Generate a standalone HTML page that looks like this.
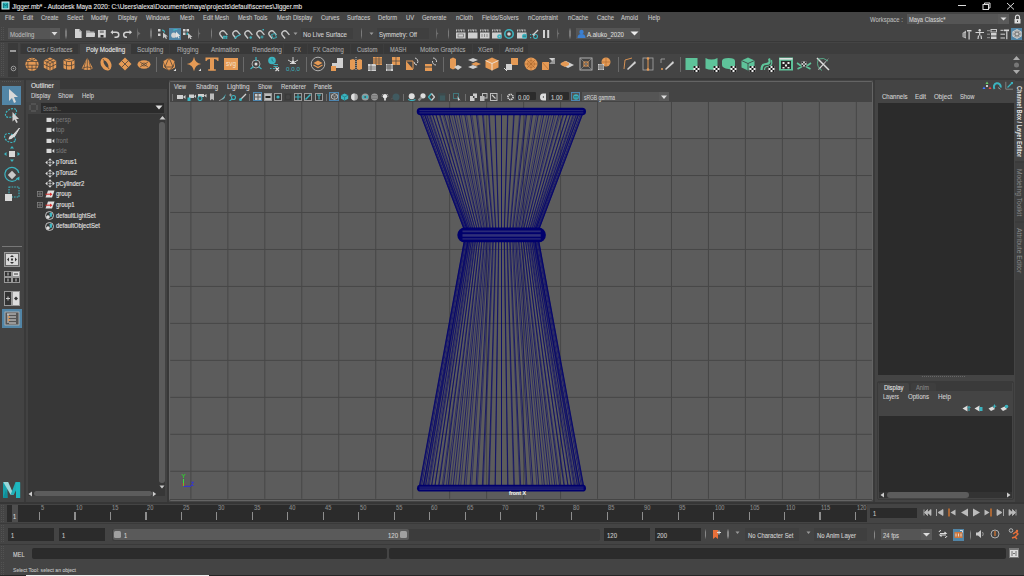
<!DOCTYPE html><html><head><meta charset="utf-8"><title>Maya</title><style>
*{margin:0;padding:0;box-sizing:border-box}
html,body{width:1024px;height:576px;overflow:hidden;background:#444}
body{position:relative;font-family:"Liberation Sans",sans-serif}
div,span,svg{position:absolute;display:block}
span{white-space:nowrap;transform-origin:0 0}
</style></head><body><div style="left:0px;top:0px;width:1024px;height:12px;background:#000;"></div>
<svg style="left:1px;top:1px;" width="9" height="9" viewBox="0 0 9 9"><rect x="0.5" y="0.5" width="8" height="8" fill="#d8f0f0"/><rect x="1.5" y="1.5" width="6" height="6" fill="#2ab2b8"/><path d="M2.6 7V2.6L4.5 5L6.4 2.6V7" stroke="#127880" stroke-width="1" fill="none"/></svg>
<span style="left:12.3px;top:2.97px;font-size:7px;line-height:7px;color:#e8e8e8;transform:scaleX(0.916);-webkit-text-stroke:0.1px #e8e8e8;">Jigger.mb* - Autodesk Maya 2020: C:\Users\alexa\Documents\maya\projects\default\scenes\Jigger.mb</span>
<div style="left:958px;top:5px;width:8px;height:1px;background:#ddd;"></div>
<svg style="left:982px;top:2px;" width="9" height="8" viewBox="0 0 9 8"><rect x="1" y="2.5" width="5.5" height="5" fill="none" stroke="#ddd" stroke-width="1"/><path d="M2.5 2.5V1H8V6H6.5" fill="none" stroke="#ddd" stroke-width="1"/></svg>
<svg style="left:1006px;top:2px;" width="9" height="8" viewBox="0 0 9 8"><path d="M1 1L8 7.5M8 1L1 7.5" stroke="#ddd" stroke-width="1"/></svg>
<div style="left:0px;top:12px;width:1024px;height:14px;background:#444444;"></div>
<span style="left:4.7px;top:15.30px;font-size:6.5px;line-height:6.5px;color:#c8c8c8;transform:scaleX(0.900);-webkit-text-stroke:0.1px #c8c8c8;">File</span>
<span style="left:22.5px;top:15.30px;font-size:6.5px;line-height:6.5px;color:#c8c8c8;transform:scaleX(0.900);-webkit-text-stroke:0.1px #c8c8c8;">Edit</span>
<span style="left:41.2px;top:15.30px;font-size:6.5px;line-height:6.5px;color:#c8c8c8;transform:scaleX(0.900);-webkit-text-stroke:0.1px #c8c8c8;">Create</span>
<span style="left:66.8px;top:15.30px;font-size:6.5px;line-height:6.5px;color:#c8c8c8;transform:scaleX(0.900);-webkit-text-stroke:0.1px #c8c8c8;">Select</span>
<span style="left:90.9px;top:15.30px;font-size:6.5px;line-height:6.5px;color:#c8c8c8;transform:scaleX(0.900);-webkit-text-stroke:0.1px #c8c8c8;">Modify</span>
<span style="left:117.6px;top:15.30px;font-size:6.5px;line-height:6.5px;color:#c8c8c8;transform:scaleX(0.900);-webkit-text-stroke:0.1px #c8c8c8;">Display</span>
<span style="left:145.8px;top:15.30px;font-size:6.5px;line-height:6.5px;color:#c8c8c8;transform:scaleX(0.900);-webkit-text-stroke:0.1px #c8c8c8;">Windows</span>
<span style="left:179.7px;top:15.30px;font-size:6.5px;line-height:6.5px;color:#c8c8c8;transform:scaleX(0.900);-webkit-text-stroke:0.1px #c8c8c8;">Mesh</span>
<span style="left:202.7px;top:15.30px;font-size:6.5px;line-height:6.5px;color:#c8c8c8;transform:scaleX(0.900);-webkit-text-stroke:0.1px #c8c8c8;">Edit Mesh</span>
<span style="left:237.9px;top:15.30px;font-size:6.5px;line-height:6.5px;color:#c8c8c8;transform:scaleX(0.900);-webkit-text-stroke:0.1px #c8c8c8;">Mesh Tools</span>
<span style="left:276.8px;top:15.30px;font-size:6.5px;line-height:6.5px;color:#c8c8c8;transform:scaleX(0.900);-webkit-text-stroke:0.1px #c8c8c8;">Mesh Display</span>
<span style="left:320.8px;top:15.30px;font-size:6.5px;line-height:6.5px;color:#c8c8c8;transform:scaleX(0.900);-webkit-text-stroke:0.1px #c8c8c8;">Curves</span>
<span style="left:347px;top:15.30px;font-size:6.5px;line-height:6.5px;color:#c8c8c8;transform:scaleX(0.900);-webkit-text-stroke:0.1px #c8c8c8;">Surfaces</span>
<span style="left:378px;top:15.30px;font-size:6.5px;line-height:6.5px;color:#c8c8c8;transform:scaleX(0.900);-webkit-text-stroke:0.1px #c8c8c8;">Deform</span>
<span style="left:406px;top:15.30px;font-size:6.5px;line-height:6.5px;color:#c8c8c8;transform:scaleX(0.900);-webkit-text-stroke:0.1px #c8c8c8;">UV</span>
<span style="left:422px;top:15.30px;font-size:6.5px;line-height:6.5px;color:#c8c8c8;transform:scaleX(0.900);-webkit-text-stroke:0.1px #c8c8c8;">Generate</span>
<span style="left:455.7px;top:15.30px;font-size:6.5px;line-height:6.5px;color:#c8c8c8;transform:scaleX(0.900);-webkit-text-stroke:0.1px #c8c8c8;">nCloth</span>
<span style="left:481.6px;top:15.30px;font-size:6.5px;line-height:6.5px;color:#c8c8c8;transform:scaleX(0.900);-webkit-text-stroke:0.1px #c8c8c8;">Fields/Solvers</span>
<span style="left:527.6px;top:15.30px;font-size:6.5px;line-height:6.5px;color:#c8c8c8;transform:scaleX(0.900);-webkit-text-stroke:0.1px #c8c8c8;">nConstraint</span>
<span style="left:567.7px;top:15.30px;font-size:6.5px;line-height:6.5px;color:#c8c8c8;transform:scaleX(0.900);-webkit-text-stroke:0.1px #c8c8c8;">nCache</span>
<span style="left:596.5px;top:15.30px;font-size:6.5px;line-height:6.5px;color:#c8c8c8;transform:scaleX(0.900);-webkit-text-stroke:0.1px #c8c8c8;">Cache</span>
<span style="left:620.8px;top:15.30px;font-size:6.5px;line-height:6.5px;color:#c8c8c8;transform:scaleX(0.900);-webkit-text-stroke:0.1px #c8c8c8;">Arnold</span>
<span style="left:647.5px;top:15.30px;font-size:6.5px;line-height:6.5px;color:#c8c8c8;transform:scaleX(0.900);-webkit-text-stroke:0.1px #c8c8c8;">Help</span>
<span style="left:869.6px;top:17.08px;font-size:6.4px;line-height:6.4px;color:#b8b8b8;transform:scaleX(0.931);-webkit-text-stroke:0.1px #b8b8b8;">Workspace :</span>
<div style="left:907px;top:14px;width:91px;height:10px;background:#555555;"></div>
<div style="left:998px;top:14px;width:11px;height:10px;background:#5a5a5a;"></div>
<svg style="left:999px;top:16px;" width="9" height="6" viewBox="0 0 9 6"><path d="M1.5 1.5H7.5L4.5 4.5Z" fill="#ddd"/></svg>
<span style="left:909px;top:17.08px;font-size:6.4px;line-height:6.4px;color:#d0d0d0;transform:scaleX(0.900);-webkit-text-stroke:0.1px #d0d0d0;">Maya Classic*</span>
<svg style="left:1013px;top:14px;" width="9" height="10" viewBox="0 0 9 10"><path d="M2.5 5V3.2a2 2 0 0 1 4 0V5" stroke="#ddd" stroke-width="1.2" fill="none"/><rect x="1.5" y="5" width="6" height="4.5" fill="#ddd"/><rect x="4" y="6.5" width="1" height="1.5" fill="#444"/></svg>
<svg style="left:1px;top:27px" width="4" height="13" fill="#525252" shape-rendering="crispEdges"><rect x="0" y="0" width="1" height="1"/><rect x="2" y="0" width="1" height="1"/><rect x="0" y="2" width="1" height="1"/><rect x="2" y="2" width="1" height="1"/><rect x="0" y="4" width="1" height="1"/><rect x="2" y="4" width="1" height="1"/><rect x="0" y="6" width="1" height="1"/><rect x="2" y="6" width="1" height="1"/><rect x="0" y="8" width="1" height="1"/><rect x="2" y="8" width="1" height="1"/><rect x="0" y="10" width="1" height="1"/><rect x="2" y="10" width="1" height="1"/><rect x="0" y="12" width="1" height="1"/><rect x="2" y="12" width="1" height="1"/></svg>
<div style="left:7.5px;top:28px;width:42px;height:11px;background:#555555;"></div>
<div style="left:49.5px;top:28px;width:10px;height:11px;background:#5a5a5a;"></div>
<svg style="left:50px;top:31px;" width="9" height="6" viewBox="0 0 9 6"><path d="M1.5 1H7.5L4.5 4.5Z" fill="#ddd"/></svg>
<span style="left:10px;top:31.63px;font-size:6.7px;line-height:6.7px;color:#b8b8b8;transform:scaleX(0.900);-webkit-text-stroke:0.1px #b8b8b8;">Modeling</span>
<div style="left:65.1px;top:28.3px;width:1.6px;height:11px;background:linear-gradient(#4a4a4a,#7a7a7a 30%,#7a7a7a 70%,#4a4a4a)"></div>
<svg style="left:74.5px;top:29px;" width="7" height="9" viewBox="0 0 7 9"><path d="M0 0H4.2L6.6 2.4V9H0Z" fill="#d2d2d2"/><path d="M4.2 0V2.4H6.6" fill="#999"/></svg>
<svg style="left:85.8px;top:30px;" width="9.5" height="7.5" viewBox="0 0 9.5 7.5"><path d="M0 0.5H3.5L4.5 1.5H8.5V7H0Z" fill="#aaa"/><path d="M0.8 3H9.5L8.5 7H0Z" fill="#d2d2d2"/></svg>
<svg style="left:98.3px;top:30px;" width="8" height="7.5" viewBox="0 0 8 7.5"><rect x="0" y="0" width="7.8" height="7.5" fill="#d2d2d2"/><rect x="1.8" y="0.5" width="4" height="2.5" fill="#888"/><rect x="2.5" y="5" width="3" height="2.5" fill="#333"/></svg>
<svg style="left:110px;top:30px;" width="9.5" height="7.5" viewBox="0 0 9.5 7.5"><path d="M0.5 2.2L3 0V4.4Z" fill="#d2d2d2"/><path d="M2.5 2.2H6.2A2.6 2.5 0 0 1 6.2 7.2H4.5" stroke="#d2d2d2" stroke-width="1.5" fill="none"/></svg>
<svg style="left:122.5px;top:30px;" width="9.5" height="7.5" viewBox="0 0 9.5 7.5"><path d="M9 2.2L6.5 0V4.4Z" fill="#d2d2d2"/><path d="M7 2.2H3.3A2.6 2.5 0 0 0 3.3 7.2H4" stroke="#d2d2d2" stroke-width="1.5" fill="none"/></svg>
<div style="left:137.2px;top:28.3px;width:1px;height:11px;background:linear-gradient(#4a4a4a,#6a6a6a 30%,#6a6a6a 70%,#4a4a4a)"></div>
<svg style="left:137.7px;top:31.3px;" width="3" height="5" viewBox="0 0 3 5"><path d="M0 0.5L2.5 2.5L0 4.5Z" fill="#6e6e6e"/></svg>
<div style="left:150.3px;top:28.3px;width:1.6px;height:11px;background:linear-gradient(#4a4a4a,#7a7a7a 30%,#7a7a7a 70%,#4a4a4a)"></div>
<svg style="left:157.8px;top:29px;" width="10" height="10" viewBox="0 0 10 10"><rect x="0" y="0" width="2.5" height="2.5" fill="#d2d2d2"/><rect x="0" y="4.5" width="2.5" height="2.5" fill="#d2d2d2"/><path d="M4 1Q6.5 1 6.5 3.5" stroke="#3cb4c0" stroke-width="1.1" fill="none"/><path d="M5 3.5V9.5L6.5 8L8 10L9 9.5L8 7.5H10Z" fill="#c8c8c8"/></svg>
<div style="left:169.1px;top:27.5px;width:11.8px;height:12px;background:#5285a6;"></div>
<svg style="left:170.5px;top:29px;" width="9.5" height="9.5" viewBox="0 0 9.5 9.5"><circle cx="2.8" cy="6.2" r="2.6" fill="#d2d2d2"/><path d="M3 2V0.5H6.5" stroke="#3cb4c0" stroke-width="1.2" fill="none"/><path d="M5 2.5V9L6.4 7.6L7.6 9.5L8.6 9L7.6 7H9.5Z" fill="#e2e2e2"/></svg>
<svg style="left:182.8px;top:29px;" width="10" height="10" viewBox="0 0 10 10"><rect x="0" y="0" width="2.5" height="2.5" fill="#d2d2d2"/><rect x="3.5" y="0" width="2.5" height="2.5" fill="#d2d2d2"/><rect x="0" y="3.5" width="2.5" height="2.5" fill="#d2d2d2"/><rect x="3.5" y="3.5" width="1.5" height="2.5" fill="#3cb4c0"/><path d="M5 4V10L6.4 8.6L7.6 10.5L8.6 10L7.6 8H9.5Z" fill="#c8c8c8"/></svg>
<div style="left:197.9px;top:28.3px;width:1px;height:11px;background:linear-gradient(#4a4a4a,#6a6a6a 30%,#6a6a6a 70%,#4a4a4a)"></div>
<svg style="left:198.4px;top:31.3px;" width="3" height="5" viewBox="0 0 3 5"><path d="M0 0.5L2.5 2.5L0 4.5Z" fill="#6e6e6e"/></svg>
<div style="left:210.8px;top:28.3px;width:1.6px;height:11px;background:linear-gradient(#4a4a4a,#7a7a7a 30%,#7a7a7a 70%,#4a4a4a)"></div>
<svg style="left:218.4px;top:28.5px;" width="10" height="10" viewBox="0 0 10 10"><g transform="rotate(-40 5 5)"><path d="M2.2 8.5V4.6a2.8 2.8 0 0 1 5.6 0V8.5" stroke="#c8c8c8" stroke-width="1.4" fill="none"/></g><path d="M6 6.5V10M8.3 6.5V10M5 7.5H9.5M5 9H9.5" stroke="#3cb4c0" stroke-width="0.9"/></svg>
<svg style="left:230.9px;top:28.5px;" width="10" height="10" viewBox="0 0 10 10"><g transform="rotate(-40 5 5)"><path d="M2.2 8.5V4.6a2.8 2.8 0 0 1 5.6 0V8.5" stroke="#c8c8c8" stroke-width="1.4" fill="none"/></g><path d="M3.5 9.5Q6 7 9.5 5.5" stroke="#3cb4c0" stroke-width="1.1" fill="none"/></svg>
<svg style="left:242.6px;top:28.5px;" width="10" height="10" viewBox="0 0 10 10"><g transform="rotate(-40 5 5)"><path d="M2.2 8.5V4.6a2.8 2.8 0 0 1 5.6 0V8.5" stroke="#c8c8c8" stroke-width="1.4" fill="none"/></g><circle cx="7.7" cy="8.5" r="1.2" fill="#3cb4c0"/></svg>
<svg style="left:255.10000000000002px;top:28.5px;" width="10" height="10" viewBox="0 0 10 10"><g transform="rotate(-40 5 5)"><path d="M2.2 8.5V4.6a2.8 2.8 0 0 1 5.6 0V8.5" stroke="#c8c8c8" stroke-width="1.4" fill="none"/></g><path d="M7 6.5V9.5M5.5 8H8.5" stroke="#3cb4c0" stroke-width="0.9"/><rect x="7.5" y="0" width="1.5" height="1.5" fill="#3cb4c0"/></svg>
<svg style="left:267.25px;top:28.5px;" width="10" height="10" viewBox="0 0 10 10"><g transform="rotate(-40 5 5)"><path d="M2.2 8.5V4.6a2.8 2.8 0 0 1 5.6 0V8.5" stroke="#c8c8c8" stroke-width="1.4" fill="none"/></g><path d="M4.5 5.5L8 4.5L9.5 8.5L6 9.5Z" fill="none" stroke="#3cb4c0" stroke-width="0.9"/></svg>
<svg style="left:279.75px;top:28.5px;" width="10" height="10" viewBox="0 0 10 10"><g transform="rotate(-40 5 5)"><path d="M2.2 8.5V4.6a2.8 2.8 0 0 1 5.6 0V8.5" stroke="#c8c8c8" stroke-width="1.4" fill="none"/></g></svg>
<svg style="left:293px;top:31.5px;" width="5" height="4" viewBox="0 0 5 4"><path d="M0.5 0.5H4.5L2.5 3Z" fill="#999"/></svg>
<div style="left:301px;top:28px;width:52px;height:11px;background:#3f3f3f;"></div>
<span style="left:303px;top:32.17px;font-size:6.3px;line-height:6.3px;color:#cfcfcf;transform:scaleX(0.982);-webkit-text-stroke:0.1px #cfcfcf;">No Live Surface</span>
<div style="left:360.5px;top:28.3px;width:1.6px;height:11px;background:linear-gradient(#4a4a4a,#7a7a7a 30%,#7a7a7a 70%,#4a4a4a)"></div>
<svg style="left:369px;top:31.5px;" width="5" height="4" viewBox="0 0 5 4"><path d="M0.5 0.5H4.5L2.5 3Z" fill="#999"/></svg>
<div style="left:377px;top:28px;width:52px;height:11px;background:#3f3f3f;"></div>
<span style="left:379px;top:32.17px;font-size:6.3px;line-height:6.3px;color:#cfcfcf;transform:scaleX(0.947);-webkit-text-stroke:0.1px #cfcfcf;">Symmetry: Off</span>
<div style="left:435.5px;top:28.3px;width:1px;height:11px;background:linear-gradient(#4a4a4a,#6a6a6a 30%,#6a6a6a 70%,#4a4a4a)"></div>
<svg style="left:436px;top:31.3px;" width="3" height="5" viewBox="0 0 3 5"><path d="M0 0.5L2.5 2.5L0 4.5Z" fill="#6e6e6e"/></svg>
<div style="left:447.7px;top:28.3px;width:1.6px;height:11px;background:linear-gradient(#4a4a4a,#7a7a7a 30%,#7a7a7a 70%,#4a4a4a)"></div>
<svg style="left:455.6px;top:29px;" width="10" height="9.5" viewBox="0 0 10 9.5"><path d="M0.5 0.5V2.5M3 0.5V2.5M5.5 0.5V2.5M8 0.5V2.5M1.5 1H2.5M4 1H5M6.5 1H7.5" stroke="#cfcfcf" stroke-width="0.9"/><rect x="0" y="3.5" width="9.5" height="6" fill="#cfcfcf"/><rect x="2" y="5" width="5.5" height="3" fill="none" stroke="#666" stroke-width="0.7"/></svg>
<svg style="left:467.7px;top:29px;" width="10" height="9.5" viewBox="0 0 10 9.5"><path d="M0.5 0.5V2.5M3 0.5V2.5M5.5 0.5V2.5M8 0.5V2.5M1.5 1H2.5M4 1H5M6.5 1H7.5" stroke="#cfcfcf" stroke-width="0.9"/><rect x="0" y="3.5" width="9.5" height="6" fill="#cfcfcf"/></svg>
<svg style="left:479.8px;top:29px;" width="10" height="9.5" viewBox="0 0 10 9.5"><path d="M0.5 0.5V2.5M3 0.5V2.5M5.5 0.5V2.5M8 0.5V2.5M1.5 1H2.5M4 1H5M6.5 1H7.5" stroke="#cfcfcf" stroke-width="0.9"/><rect x="0" y="3.5" width="9.5" height="6" fill="#cfcfcf"/><path d="M2 5V8M4.5 5V8M7 5V8" stroke="#777" stroke-width="0.8"/></svg>
<svg style="left:492.3px;top:29px;" width="10" height="9.5" viewBox="0 0 10 9.5"><path d="M0.5 0.5V2.5M3 0.5V2.5M5.5 0.5V2.5M8 0.5V2.5M1.5 1H2.5M4 1H5M6.5 1H7.5" stroke="#cfcfcf" stroke-width="0.9"/><rect x="0" y="3.5" width="9.5" height="6" fill="#cfcfcf"/><circle cx="7.5" cy="7.5" r="2.3" fill="#3cb4c0"/><circle cx="7.5" cy="7.5" r="0.8" fill="#bbb"/></svg>
<svg style="left:504.3px;top:28.8px;" width="10" height="10" viewBox="0 0 10 10"><circle cx="5" cy="5" r="4.2" fill="none" stroke="#3cb4c0" stroke-width="1.6"/><circle cx="5" cy="5" r="1.8" fill="#d8d8d8"/></svg>
<svg style="left:516.8px;top:29px;" width="10" height="9.5" viewBox="0 0 10 9.5"><path d="M0.5 0.5V2.5M3 0.5V2.5M5.5 0.5V2.5M8 0.5V2.5M1.5 1H2.5M4 1H5M6.5 1H7.5" stroke="#cfcfcf" stroke-width="0.9"/><rect x="0" y="3.5" width="9.5" height="6" fill="#cfcfcf"/><circle cx="7.5" cy="7.2" r="2.5" fill="#3cb4c0"/><path d="M6 7.2H9" stroke="#444" stroke-width="0.6"/></svg>
<svg style="left:529.3px;top:28.5px;" width="10" height="10.5" viewBox="0 0 10 10.5"><circle cx="6.5" cy="7.5" r="2" fill="none" stroke="#3cb4c0" stroke-width="1.1"/><rect x="1" y="5" width="1.2" height="1.2" fill="#3cb4c0"/><rect x="1" y="8" width="1.2" height="1.2" fill="#3cb4c0"/><path d="M4.5 5.5L9 1" stroke="#d2d2d2" stroke-width="1.3"/><path d="M3.5 5L5.5 6.5" stroke="#d2d2d2" stroke-width="1.5"/></svg>
<svg style="left:543px;top:29.5px;" width="6.5" height="8" viewBox="0 0 6.5 8"><rect x="0" y="0" width="2" height="8" fill="#d2d2d2"/><rect x="4.2" y="0" width="2" height="8" fill="#d2d2d2"/></svg>
<div style="left:556.9px;top:28.3px;width:1px;height:11px;background:linear-gradient(#4a4a4a,#6a6a6a 30%,#6a6a6a 70%,#4a4a4a)"></div>
<svg style="left:557.4px;top:31.3px;" width="3" height="5" viewBox="0 0 3 5"><path d="M0 0.5L2.5 2.5L0 4.5Z" fill="#6e6e6e"/></svg>
<div style="left:569.4px;top:28.3px;width:1.6px;height:11px;background:linear-gradient(#4a4a4a,#7a7a7a 30%,#7a7a7a 70%,#4a4a4a)"></div>
<div style="left:576px;top:27.6px;width:64px;height:11.6px;background:#555555;"></div>
<svg style="left:577px;top:29px;" width="9" height="9" viewBox="0 0 9 9"><circle cx="4.5" cy="3" r="2.2" fill="#3b7fd1"/><path d="M0.5 9a4 4 0 0 1 8 0Z" fill="#3b7fd1"/></svg>
<span style="left:587px;top:32.18px;font-size:6.4px;line-height:6.4px;color:#d8d8d8;transform:scaleX(0.945);-webkit-text-stroke:0.1px #d8d8d8;">A.aluko_2020</span>
<svg style="left:630px;top:31px;" width="9" height="5" viewBox="0 0 9 5"><path d="M0.5 0.5H8.5L4.5 4.5Z" fill="#eee"/></svg>
<svg style="left:962.2px;top:29px;" width="10" height="10.5" viewBox="0 0 10 10.5"><path d="M5 1H9.5V2.5H5Z" fill="#d2d2d2"/><rect x="6.5" y="2.5" width="1.2" height="8" fill="#d2d2d2"/><path d="M0.5 4L4 1.5V9.5L0.5 8Z" fill="#bbb"/><path d="M1 5H4M1 7H4" stroke="#555" stroke-width="0.6"/></svg>
<svg style="left:974.9px;top:29px;" width="9.5" height="10.5" viewBox="0 0 9.5 10.5"><circle cx="4.7" cy="1.3" r="1.2" fill="#d2d2d2"/><path d="M0.5 3.5H9M4.7 2.5V6.5M3.5 6.5L3 10M6 6.5L6.5 10" stroke="#d2d2d2" stroke-width="1.2" fill="none"/></svg>
<svg style="left:987.2px;top:29px;" width="10" height="10.5" viewBox="0 0 10 10.5"><rect x="4" y="0.5" width="5.5" height="2.5" fill="none" stroke="#d2d2d2" stroke-width="0.9"/><rect x="4" y="4" width="5.5" height="2.5" fill="#d2d2d2"/><rect x="4" y="7.5" width="5.5" height="2.5" fill="#d2d2d2"/><path d="M0 1.7H3M0 5.2H3M0 8.7H3" stroke="#aaa" stroke-width="0.8"/></svg>
<svg style="left:999.9px;top:29px;" width="9.5" height="10.5" viewBox="0 0 9.5 10.5"><path d="M4 0.5H9.5V2.2H4Z" fill="#d2d2d2"/><rect x="6.2" y="2.2" width="1.2" height="8" fill="#d2d2d2"/><path d="M0.5 1.3H3.5M0.5 5.2H5M0.5 9H5" stroke="#d2d2d2" stroke-width="1"/></svg>
<div style="left:1010.8px;top:27.9px;width:11.6px;height:11.9px;background:#5285a6;"></div>
<svg style="left:1011.8px;top:28.9px;" width="10" height="10" viewBox="0 0 10 10"><path d="M5 0.5L9.2 2.8V7.2L5 9.5L0.8 7.2V2.8Z" fill="#9a9a9a" stroke="#d8d8d8" stroke-width="0.8"/><path d="M0.8 2.8L9.2 7.2M9.2 2.8L0.8 7.2M5 0.5V9.5" stroke="#e0e0e0" stroke-width="0.6"/><circle cx="5" cy="5" r="2" fill="none" stroke="#555" stroke-width="0.6"/></svg>
<div style="left:0px;top:40.5px;width:1024px;height:1.5px;background:#383838;"></div>
<div style="left:0px;top:42px;width:1024px;height:36px;background:#444444;"></div>
<svg style="left:1px;top:43px" width="4" height="34" fill="#525252" shape-rendering="crispEdges"><rect x="0" y="0" width="1" height="1"/><rect x="2" y="0" width="1" height="1"/><rect x="0" y="2" width="1" height="1"/><rect x="2" y="2" width="1" height="1"/><rect x="0" y="4" width="1" height="1"/><rect x="2" y="4" width="1" height="1"/><rect x="0" y="6" width="1" height="1"/><rect x="2" y="6" width="1" height="1"/><rect x="0" y="8" width="1" height="1"/><rect x="2" y="8" width="1" height="1"/><rect x="0" y="10" width="1" height="1"/><rect x="2" y="10" width="1" height="1"/><rect x="0" y="12" width="1" height="1"/><rect x="2" y="12" width="1" height="1"/><rect x="0" y="14" width="1" height="1"/><rect x="2" y="14" width="1" height="1"/><rect x="0" y="16" width="1" height="1"/><rect x="2" y="16" width="1" height="1"/><rect x="0" y="18" width="1" height="1"/><rect x="2" y="18" width="1" height="1"/><rect x="0" y="20" width="1" height="1"/><rect x="2" y="20" width="1" height="1"/><rect x="0" y="22" width="1" height="1"/><rect x="2" y="22" width="1" height="1"/><rect x="0" y="24" width="1" height="1"/><rect x="2" y="24" width="1" height="1"/><rect x="0" y="26" width="1" height="1"/><rect x="2" y="26" width="1" height="1"/><rect x="0" y="28" width="1" height="1"/><rect x="2" y="28" width="1" height="1"/><rect x="0" y="30" width="1" height="1"/><rect x="2" y="30" width="1" height="1"/><rect x="0" y="32" width="1" height="1"/><rect x="2" y="32" width="1" height="1"/></svg>
<div style="left:8px;top:43px;width:10px;height:34px;background:#3a3a3a;"></div>
<div style="left:10px;top:50px;width:6px;height:2px;background:#9a9a9a;"></div>
<svg style="left:9px;top:64px;" width="9" height="9" viewBox="0 0 9 9"><circle cx="4.5" cy="4.5" r="2.3" stroke="#999" stroke-width="1" fill="none"/><circle cx="4.5" cy="4.5" r="0.8" fill="#999"/></svg>
<div style="left:20px;top:43px;width:1004px;height:11px;background:#3d3d3d;"></div>
<div style="left:21px;top:43.5px;width:57px;height:10.5px;background:#383838;"></div>
<span style="left:26.5px;top:46.91px;font-size:6.6px;line-height:6.6px;color:#a8a8a8;transform:scaleX(0.868);-webkit-text-stroke:0.1px #a8a8a8;">Curves / Surfaces</span>
<div style="left:79.75px;top:43.5px;width:50.75px;height:10.5px;background:#444444;"></div>
<span style="left:85.5px;top:46.91px;font-size:6.6px;line-height:6.6px;color:#e8e8e8;transform:scaleX(0.946);-webkit-text-stroke:0.1px #e8e8e8;">Poly Modeling</span>
<div style="left:131px;top:43.5px;width:38px;height:10.5px;background:#383838;"></div>
<span style="left:137.25px;top:46.91px;font-size:6.6px;line-height:6.6px;color:#a8a8a8;transform:scaleX(0.969);-webkit-text-stroke:0.1px #a8a8a8;">Sculpting</span>
<div style="left:169.5px;top:43.5px;width:35.25px;height:10.5px;background:#383838;"></div>
<span style="left:176.5px;top:46.91px;font-size:6.6px;line-height:6.6px;color:#a8a8a8;transform:scaleX(0.961);-webkit-text-stroke:0.1px #a8a8a8;">Rigging</span>
<div style="left:205.25px;top:43.5px;width:40.25px;height:10.5px;background:#383838;"></div>
<span style="left:211px;top:46.91px;font-size:6.6px;line-height:6.6px;color:#a8a8a8;transform:scaleX(0.961);-webkit-text-stroke:0.1px #a8a8a8;">Animation</span>
<div style="left:246px;top:43.5px;width:37.25px;height:10.5px;background:#383838;"></div>
<span style="left:252.25px;top:46.91px;font-size:6.6px;line-height:6.6px;color:#a8a8a8;transform:scaleX(0.985);-webkit-text-stroke:0.1px #a8a8a8;">Rendering</span>
<div style="left:283.75px;top:43.5px;width:23.25px;height:10.5px;background:#383838;"></div>
<span style="left:294px;top:46.91px;font-size:6.6px;line-height:6.6px;color:#a8a8a8;transform:scaleX(0.806);-webkit-text-stroke:0.1px #a8a8a8;">FX</span>
<div style="left:307.5px;top:43.5px;width:42.5px;height:10.5px;background:#383838;"></div>
<span style="left:312.5px;top:46.91px;font-size:6.6px;line-height:6.6px;color:#a8a8a8;transform:scaleX(0.890);-webkit-text-stroke:0.1px #a8a8a8;">FX Caching</span>
<div style="left:350.5px;top:43.5px;width:32.75px;height:10.5px;background:#383838;"></div>
<span style="left:356.5px;top:46.91px;font-size:6.6px;line-height:6.6px;color:#a8a8a8;transform:scaleX(0.902);-webkit-text-stroke:0.1px #a8a8a8;">Custom</span>
<div style="left:383.75px;top:43.5px;width:28.75px;height:10.5px;background:#383838;"></div>
<span style="left:390px;top:46.91px;font-size:6.6px;line-height:6.6px;color:#a8a8a8;transform:scaleX(0.865);-webkit-text-stroke:0.1px #a8a8a8;">MASH</span>
<div style="left:413px;top:43.5px;width:59px;height:10.5px;background:#383838;"></div>
<span style="left:419.5px;top:46.91px;font-size:6.6px;line-height:6.6px;color:#a8a8a8;transform:scaleX(0.947);-webkit-text-stroke:0.1px #a8a8a8;">Motion Graphics</span>
<div style="left:472.5px;top:43.5px;width:26.5px;height:10.5px;background:#383838;"></div>
<span style="left:477.5px;top:46.91px;font-size:6.6px;line-height:6.6px;color:#a8a8a8;transform:scaleX(0.889);-webkit-text-stroke:0.1px #a8a8a8;">XGen</span>
<div style="left:499.5px;top:43.5px;width:28.5px;height:10.5px;background:#383838;"></div>
<span style="left:505px;top:46.91px;font-size:6.6px;line-height:6.6px;color:#a8a8a8;transform:scaleX(0.954);-webkit-text-stroke:0.1px #a8a8a8;">Arnold</span>
<svg style="left:23.5px;top:56px;" width="16" height="16" viewBox="0 0 16 16"><circle cx="8" cy="8.3" r="6.6" fill="#e59a55"/><path d="M2 5.5H14M1.8 9.2H14.2M3 12.3H13M8 1.7V4.5M4.5 3L8 4.8L11.5 3M4 5.5Q3.3 8.5 4.3 12.5M12 5.5Q12.7 8.5 11.7 12.5M8 9.2V15" stroke="#4a4038" stroke-width="0.75" fill="none"/></svg>
<svg style="left:41.75px;top:56px;" width="16" height="16" viewBox="0 0 16 16"><path d="M8 1.5L14.2 4.5V11.8L8 14.8L1.8 11.8V4.5Z" fill="#e59a55"/><path d="M1.8 4.5L8 7.5L14.2 4.5M8 7.5V14.8M4.9 3L11.1 6M11.1 3L4.9 6M1.8 8.2L8 11.2L14.2 8.2M4.9 6V13.3M11.1 6V13.3" stroke="#4a4038" stroke-width="0.75" fill="none"/></svg>
<svg style="left:60.5px;top:56px;" width="16" height="16" viewBox="0 0 16 16"><path d="M2.5 4Q8 0.8 13.5 4V12.2Q8 15.5 2.5 12.2Z" fill="#e59a55"/><path d="M2.5 4Q8 7.2 13.5 4M2.5 8.2Q8 11.4 13.5 8.2M5.5 5.7V14M10.5 5.7V14M5.5 2.2L8 3.5L10.5 2.2" stroke="#4a4038" stroke-width="0.75" fill="none"/></svg>
<svg style="left:79.25px;top:56px;" width="16" height="16" viewBox="0 0 16 16"><path d="M8.3 1.8L14 12.5Q8.3 15.5 2.6 12.5Z" fill="#e59a55"/><path d="M8.3 2V14.5M2.6 12.3Q8.3 9.5 14 12.3M6.5 5.5L4.5 13.8M10.1 5.5L12.1 13.8" stroke="#4a4038" stroke-width="0.7" fill="none"/></svg>
<svg style="left:98px;top:56px;" width="16" height="16" viewBox="0 0 16 16"><ellipse cx="8" cy="8" rx="5" ry="6.8" fill="#e59a55" transform="rotate(-30 8 8)"/><ellipse cx="8" cy="8" rx="1.6" ry="3.8" fill="#444" transform="rotate(-30 8 8)"/><path d="M5 3L6.5 5.5M11 13L9.5 10.5" stroke="#4a4038" stroke-width="0.7"/></svg>
<svg style="left:116.75px;top:56px;" width="16" height="16" viewBox="0 0 16 16"><path d="M8 1.5L14.5 8L8 14.5L1.5 8Z" fill="#e59a55"/><path d="M4.8 4.8L11.2 11.2M11.2 4.8L4.8 11.2" stroke="#4a4038" stroke-width="0.8"/></svg>
<svg style="left:135.5px;top:56px;" width="16" height="16" viewBox="0 0 16 16"><ellipse cx="8" cy="8.5" rx="6.5" ry="4.2" fill="#e59a55"/><path d="M4 6L12 11M12 6L4 11" stroke="#4a4038" stroke-width="0.7"/><ellipse cx="8" cy="8.5" rx="2.5" ry="1.5" fill="none" stroke="#4a4038" stroke-width="0.6"/></svg>
<div style="left:156px;top:57px;width:1px;height:15px;background:#6a6a6a;"></div>
<svg style="left:161px;top:56px;" width="16" height="16" viewBox="0 0 16 16"><path d="M8 1.5L14 5V11.5L8 14.5L2 11.5V5Z" fill="#e59a55"/><path d="M8 1.5L4 11H12Z M2 5L4 11M14 5L12 11M4 11L8 14.5L12 11M2 5L8 1.5L14 5" stroke="#4a4038" stroke-width="0.75" fill="none"/><path d="M12.5 15H15V12.5Z" fill="#ddd"/></svg>
<div style="left:181px;top:57px;width:1px;height:15px;background:#6a6a6a;"></div>
<svg style="left:185.5px;top:56px;" width="16" height="16" viewBox="0 0 16 16"><path d="M8 0.8Q9 7 15.2 8Q9 9 8 15.2Q7 9 0.8 8Q7 7 8 0.8Z" fill="#e59a55"/><path d="M12.5 15H15V12.5Z" fill="#ddd"/></svg>
<svg style="left:204.25px;top:56px;" width="16" height="16" viewBox="0 0 16 16"><path d="M1.5 1.5H14.5V5H13.5Q13 3 10 3V13.3H11.8V14.8H4.2V13.3H6V3Q3 3 2.5 5H1.5Z" fill="#e59a55"/></svg>
<svg style="left:223px;top:56px;" width="16" height="16" viewBox="0 0 16 16"><rect x="1" y="2" width="14" height="12" fill="#e59a55"/><text x="8" y="10.3" font-size="6.3" text-anchor="middle" fill="#f4e0cc" font-family="Liberation Sans">svg</text></svg>
<div style="left:243px;top:57px;width:1px;height:15px;background:#6a6a6a;"></div>
<svg style="left:248px;top:56px;" width="16" height="16" viewBox="0 0 16 16"><circle cx="8" cy="8" r="4" fill="none" stroke="#aaa" stroke-width="1"/><circle cx="8" cy="8" r="1.5" fill="#ddd"/><path d="M8 1V5M2.5 13L5.5 10.5M13.5 13L10.5 10.5" stroke="#3cb4c0" stroke-width="1.2"/></svg>
<svg style="left:264px;top:56px;" width="16" height="16" viewBox="0 0 16 16"><circle cx="8" cy="4.5" r="3.8" fill="#3cb4c0"/><path d="M8 2.5V4.5L9.5 5.5" stroke="#1a6a72" stroke-width="0.8" fill="none"/><path d="M9.5 8.5H14M9.5 10.5H14M6 12.5H7.5M9 12.5H11" stroke="#3cb4c0" stroke-width="0.9"/><path d="M11.5 11.5L15 15M15 11.5L11.5 15" stroke="#ddd" stroke-width="1.1"/></svg>
<svg style="left:285px;top:56px;" width="16" height="16" viewBox="0 0 16 16"><path d="M8 1V7M3 4L8 7L13 4M5 7.5H11" stroke="#ddd" stroke-width="0.9" fill="none"/><circle cx="8" cy="6" r="1.5" fill="#ddd"/><text x="8" y="14.8" font-size="6.2" text-anchor="middle" fill="#3cb4c0" font-family="Liberation Sans">0,0,0</text></svg>
<div style="left:306px;top:57px;width:1px;height:15px;background:#6a6a6a;"></div>
<svg style="left:310px;top:56px;" width="16" height="16" viewBox="0 0 16 16"><circle cx="8" cy="8" r="6.8" fill="none" stroke="#bbb" stroke-width="0.9"/><path d="M3.5 7L8 4.5L12.5 7L8 9.5Z" fill="#e59a55"/><path d="M3.5 9L8 11.5L12.5 9" stroke="#e59a55" stroke-width="1.2" fill="none"/></svg>
<svg style="left:328.5px;top:56px;" width="16" height="16" viewBox="0 0 16 16"><rect x="8" y="2" width="6" height="5" fill="#d0d0d0"/><rect x="3" y="7" width="5" height="5" fill="#d0d0d0"/><rect x="8" y="7" width="6" height="5" fill="#d0d0d0"/><rect x="2" y="10" width="5" height="5" fill="#e59a55"/></svg>
<svg style="left:347.75px;top:56px;" width="16" height="16" viewBox="0 0 16 16"><path d="M2 4L5 3L7 4V13L4 14L2 13Z" fill="#e59a55"/><path d="M9 4L12 3L14 4V13L11 14L9 13Z" fill="#e59a55"/><path d="M8 1V15" stroke="#bbb" stroke-dasharray="1 1"/></svg>
<svg style="left:366.5px;top:56px;" width="16" height="16" viewBox="0 0 16 16"><rect x="6" y="1" width="9" height="8" fill="#e59a55"/><rect x="1" y="8" width="8" height="7" fill="#d0d0d0"/><path d="M6 3H15M6 5H15M6 7H15M9 1V9M12 1V9M1 11H9M1 13H9M4 8V15" stroke="#444" stroke-width="0.6"/></svg>
<svg style="left:384.5px;top:56px;" width="16" height="16" viewBox="0 0 16 16"><rect x="7" y="1" width="8" height="8" fill="#e59a55"/><rect x="1" y="8" width="7" height="7" fill="#d0d0d0"/><path d="M1 10H8M1 12H8M3 8V15M5 8V15M11 1V9M7 5H15" stroke="#444" stroke-width="0.7"/></svg>
<svg style="left:404px;top:56px;" width="16" height="16" viewBox="0 0 16 16"><path d="M2 5L9 13V14H2Z" fill="#e59a55"/><path d="M2 5H9V13" fill="none" stroke="#e59a55" stroke-width="1"/><path d="M11 2A3.5 3.5 0 0 1 13.5 7M13 9A3.5 3.5 0 0 1 10 6" stroke="#d0d0d0" stroke-width="1" fill="none"/></svg>
<svg style="left:422.75px;top:56px;" width="16" height="16" viewBox="0 0 16 16"><rect x="2" y="8" width="7" height="7" fill="#e59a55"/><path d="M2 11H9" stroke="#444"/><path d="M10 2A3.5 3.5 0 0 1 13.5 6M13 9A3.5 3.5 0 0 1 9.5 5" stroke="#d0d0d0" stroke-width="1" fill="none"/></svg>
<div style="left:443px;top:57px;width:1px;height:15px;background:#6a6a6a;"></div>
<svg style="left:446.5px;top:56px;" width="16" height="16" viewBox="0 0 16 16"><path d="M3 3L6 1.5L9 3V12L6 13.5L3 12Z" fill="#e59a55"/><path d="M7 11L11 9L15 11L11 14Z" fill="#d0d0d0"/></svg>
<svg style="left:466px;top:56px;" width="16" height="16" viewBox="0 0 16 16"><path d="M2 4L7 2L12 4L7 6Z" fill="#d0d0d0"/><path d="M5 8L10 6L15 8L10 10Z" fill="#e59a55"/><path d="M2 11L7 9L12 11L7 13Z" fill="#d0d0d0"/></svg>
<svg style="left:484px;top:56px;" width="16" height="16" viewBox="0 0 16 16"><path d="M8 1.5L14.5 4.5V11.5L8 14.5L1.5 11.5V4.5Z" fill="#e59a55"/><path d="M1.5 4.5L8 7.5L14.5 4.5M8 7.5V14.5" stroke="#eee" stroke-width="0.8" fill="none"/></svg>
<svg style="left:502.75px;top:56px;" width="16" height="16" viewBox="0 0 16 16"><rect x="8" y="2" width="7" height="7" fill="#e59a55"/><rect x="3" y="8" width="6" height="6" fill="#d0d0d0"/><path d="M1 12L4 15" stroke="#ddd"/></svg>
<svg style="left:522.5px;top:56px;" width="16" height="16" viewBox="0 0 16 16"><circle cx="8" cy="8" r="6.5" fill="#e59a55"/><path d="M2 8H14M8 2V14M3.5 3.5L12.5 12.5M12.5 3.5L3.5 12.5" stroke="#a8652c" stroke-width="0.6"/><circle cx="8" cy="8" r="3.5" fill="none" stroke="#a8652c" stroke-width="0.6"/></svg>
<svg style="left:540px;top:56px;" width="16" height="16" viewBox="0 0 16 16"><path d="M9 2H15V8Z" fill="#d0d0d0"/><path d="M2 6H9V14H2Z" fill="#e59a55"/><path d="M9 8H15V2Z" fill="#999"/><path d="M2 6L9 14" stroke="#a8652c" stroke-width="0.6"/></svg>
<svg style="left:558.75px;top:56px;" width="16" height="16" viewBox="0 0 16 16"><path d="M1 8L7 5L15 9L9 12Z" fill="#d0d0d0"/><path d="M2 7L6 5L10 7L6 9Z" fill="#e59a55"/><path d="M2 7V9L6 11L10 9V7" fill="#e59a55"/></svg>
<svg style="left:578px;top:56px;" width="16" height="16" viewBox="0 0 16 16"><rect x="2" y="2" width="12" height="12" fill="none" stroke="#bbb" stroke-width="0.9"/><path d="M2 2L14 14M14 2L2 14" stroke="#999" stroke-width="0.6"/><rect x="6" y="6" width="4" height="4" fill="none" stroke="#e59a55" stroke-width="1"/></svg>
<svg style="left:596.25px;top:56px;" width="16" height="16" viewBox="0 0 16 16"><circle cx="10" cy="6" r="4.5" fill="#e59a55"/><path d="M6 6H14M10 2V10" stroke="#a8652c" stroke-width="0.6"/><rect x="2" y="8" width="6" height="6" fill="#d0d0d0"/><path d="M2 10H8M2 12H8M4 8V14M6 8V14" stroke="#444" stroke-width="0.6"/></svg>
<div style="left:617.5px;top:57px;width:1px;height:15px;background:#6a6a6a;"></div>
<svg style="left:621.25px;top:56px;" width="16" height="16" viewBox="0 0 16 16"><path d="M3 13L4 4L11 2" stroke="#e59a55" stroke-width="0.9" fill="none"/><path d="M6 13L14 5L15 7L7 14Z" fill="#d0d0d0"/></svg>
<svg style="left:640px;top:56px;" width="16" height="16" viewBox="0 0 16 16"><rect x="3" y="2" width="10" height="12" fill="none" stroke="#aaa" stroke-width="0.8"/><path d="M8 2V14" stroke="#e59a55" stroke-width="1"/><circle cx="8" cy="2.5" r="1.3" fill="#e59a55"/><circle cx="8" cy="13.5" r="1.3" fill="#e59a55"/></svg>
<svg style="left:658.75px;top:56px;" width="16" height="16" viewBox="0 0 16 16"><path d="M2 3H6M2 3V7" stroke="#aaa" stroke-width="0.8" fill="none"/><circle cx="3" cy="13" r="1" fill="#e59a55"/><path d="M6 13L14 5L15 7L7 14Z" fill="#d0d0d0"/></svg>
<div style="left:680px;top:57px;width:1px;height:15px;background:#6a6a6a;"></div>
<svg style="left:683.75px;top:56px;" width="16" height="16" viewBox="0 0 16 16"><rect x="1.5" y="2" width="12" height="12" fill="#5ec39a"/><rect x="9.5" y="10" width="6" height="6" fill="#f0f0f0"/><path d="M9.5 10h2v2h-2zM13.5 10h2v2h-2zM11.5 12h2v2h-2zM9.5 14h2v2h-2zM13.5 14h2v2h-2z" fill="#1a1a1a"/></svg>
<svg style="left:703.75px;top:56px;" width="16" height="16" viewBox="0 0 16 16"><path d="M1.5 2Q7.5 5 13.5 2V12.5Q7.5 15 1.5 12.5Z" fill="#5ec39a"/><rect x="9.5" y="10" width="6" height="6" fill="#f0f0f0"/><path d="M9.5 10h2v2h-2zM13.5 10h2v2h-2zM11.5 12h2v2h-2zM9.5 14h2v2h-2zM13.5 14h2v2h-2z" fill="#1a1a1a"/></svg>
<svg style="left:721.25px;top:56px;" width="16" height="16" viewBox="0 0 16 16"><path d="M1 5Q1 2 7.5 2Q14 2 14 5V11Q14 14 7.5 13Q1 12 1 9Z" fill="#5ec39a"/><rect x="9.5" y="10" width="6" height="6" fill="#f0f0f0"/><path d="M9.5 10h2v2h-2zM13.5 10h2v2h-2zM11.5 12h2v2h-2zM9.5 14h2v2h-2zM13.5 14h2v2h-2z" fill="#1a1a1a"/></svg>
<svg style="left:740px;top:56px;" width="16" height="16" viewBox="0 0 16 16"><path d="M8 1.5L14.5 4.5V11.5L8 14.5L1.5 11.5V4.5Z" fill="#5ec39a"/><path d="M1.5 4.5L8 7.5L14.5 4.5M8 7.5V14.5" stroke="#3a3a3a" stroke-width="0.8" fill="none"/><rect x="9.5" y="10" width="6" height="6" fill="#f0f0f0"/><path d="M9.5 10h2v2h-2zM13.5 10h2v2h-2zM11.5 12h2v2h-2zM9.5 14h2v2h-2zM13.5 14h2v2h-2z" fill="#1a1a1a"/></svg>
<svg style="left:758.75px;top:56px;" width="16" height="16" viewBox="0 0 16 16"><path d="M2.5 14Q2.5 8 7 8Q12 8 10 2.5" stroke="#5ec39a" stroke-width="2.2" fill="none"/><path d="M5.5 14Q5.5 10.5 8.5 10.5Q14 10.5 12.5 4" stroke="#5ec39a" stroke-width="1.2" fill="none"/><rect x="9.5" y="10" width="6" height="6" fill="#f0f0f0"/><path d="M9.5 10h2v2h-2zM13.5 10h2v2h-2zM11.5 12h2v2h-2zM9.5 14h2v2h-2zM13.5 14h2v2h-2z" fill="#1a1a1a"/></svg>
<svg style="left:777.5px;top:56px;" width="16" height="16" viewBox="0 0 16 16"><rect x="1" y="1.5" width="14" height="13" fill="#5ec39a"/><rect x="1.5" y="2" width="13" height="1.6" fill="#e0e0e0"/><rect x="3" y="4.8" width="10" height="8.2" fill="#2a2a2a"/><path d="M4.5 6h2v2h-2zM9.5 6h2v2h-2zM7 8.5h2v2H7zM4.5 11h2v1.5h-2zM9.5 11h2v1.5h-2z" fill="#eee"/></svg>
<svg style="left:796.25px;top:56px;" width="16" height="16" viewBox="0 0 16 16"><path d="M1 7L6 10.5M15 7L10 10.5M1.5 13L6 10.5M14.5 13L10 10.5" stroke="#5ec39a" stroke-width="1.6" fill="none"/><rect x="5.5" y="5.5" width="5" height="5" fill="#eee"/><path d="M5.5 5.5h1.7v1.7H5.5zM8.8 5.5h1.7v1.7H8.8zM7.2 7.2h1.6v1.6H7.2zM5.5 8.8h1.7v1.7H5.5zM8.8 8.8h1.7v1.7H8.8z" fill="#222"/></svg>
<svg style="left:815px;top:56px;" width="16" height="16" viewBox="0 0 16 16"><path d="M2 2L14 14" stroke="#ddd" stroke-width="1.5"/><path d="M14.5 1.5L4 12L3 14L5 13Z" fill="#ddd"/><path d="M3 4Q1 11 7 14.5M3 3Q9 1 13 5" stroke="#5ec39a" stroke-width="0.8" fill="none"/></svg>
<svg style="left:1012px;top:55px;" width="9" height="20" viewBox="0 0 9 20"><path d="M1 5L4.5 1L8 5Z" fill="#aaa"/><circle cx="4.5" cy="10" r="2.5" fill="#777"/><path d="M1 15L4.5 19L8 15Z" fill="#aaa"/></svg>
<div style="left:0px;top:78px;width:1024px;height:1.5px;background:#383838;"></div>
<div style="left:0px;top:79.5px;width:1024px;height:422px;background:#444444;"></div>
<div style="left:0px;top:79.5px;width:24px;height:422px;background:#434343;"></div>
<svg style="left:2px;top:81px" width="20" height="2" fill="#555" shape-rendering="crispEdges"><rect x="0" y="0" width="1" height="1"/><rect x="2" y="0" width="1" height="1"/><rect x="4" y="0" width="1" height="1"/><rect x="6" y="0" width="1" height="1"/><rect x="8" y="0" width="1" height="1"/><rect x="10" y="0" width="1" height="1"/><rect x="12" y="0" width="1" height="1"/><rect x="14" y="0" width="1" height="1"/><rect x="16" y="0" width="1" height="1"/><rect x="18" y="0" width="1" height="1"/></svg>
<div style="left:2px;top:86px;width:19.3px;height:19px;background:#5285a6;"></div>
<svg style="left:5px;top:87px;" width="14" height="18" viewBox="0 0 14 18"><path d="M4 2V14L7 11L9 16L11 15L9 10H13Z" fill="#d8d8d8"/></svg>
<svg style="left:2px;top:106px;" width="20" height="18" viewBox="0 0 20 18"><ellipse cx="9" cy="7" rx="6" ry="3.8" fill="none" stroke="#3cb4c0" stroke-width="1.2" stroke-dasharray="2 1.1" transform="rotate(-30 9 7)"/><path d="M10.5 6V15.5L12.6 13.6L14.3 17L15.8 16.2L14.2 13H17Z" fill="#d0d0d0"/></svg>
<svg style="left:2px;top:125px;" width="20" height="20" viewBox="0 0 20 20"><ellipse cx="8" cy="13" rx="5.8" ry="4" fill="none" stroke="#3cb4c0" stroke-width="1.2" stroke-dasharray="2 1.1" transform="rotate(30 8 13)"/><path d="M17.5 3L11 10L12.5 11.5Z" fill="#d8d8d8" stroke="#d8d8d8" stroke-width="1"/><path d="M10.5 9.5Q7 10.5 6.5 14.5Q10.5 14 12.5 11.5Z" fill="#d8d8d8"/></svg>
<svg style="left:3px;top:145px;" width="18" height="18" viewBox="0 0 18 18"><rect x="6" y="6" width="6" height="6" fill="#d8d8d8"/><path d="M9 1L11 3.5H7Z M9 17L11 14.5H7Z M1 9L3.5 7V11Z M17 9L14.5 7V11Z" fill="#3cb4c0"/></svg>
<svg style="left:3px;top:166px;" width="18" height="18" viewBox="0 0 18 18"><path d="M14.6 12.5A7 7 0 1 1 15.8 7" fill="none" stroke="#3cb4c0" stroke-width="1.2"/><path d="M13 12.5L16.5 10.5L16.2 14.5Z" fill="#3cb4c0"/><path d="M9 4.8L13.2 9L9 13.2L4.8 9Z" fill="#c8c8c8"/></svg>
<svg style="left:3px;top:185px;" width="18" height="18" viewBox="0 0 18 18"><rect x="6" y="2" width="10" height="10" fill="none" stroke="#3cb4c0" stroke-width="1.1" stroke-dasharray="1.6 1"/><rect x="2" y="9" width="7" height="7" fill="#d8d8d8"/></svg>
<div style="left:2px;top:246px;width:19.5px;height:1px;background:#777;"></div>
<svg style="left:4px;top:252px;" width="16" height="15" viewBox="0 0 16 15"><rect x="0.5" y="0.5" width="15" height="14" fill="#666" stroke="#999"/><rect x="2" y="2" width="12" height="11" fill="#d8d8d8"/><path d="M8 3L10 5H6ZM8 12L10 10H6ZM3 7.5L5 5.5V9.5ZM13 7.5L11 5.5V9.5Z" fill="#333"/><rect x="7" y="6.5" width="2" height="2" fill="#333"/></svg>
<svg style="left:4px;top:271px;" width="16" height="12" viewBox="0 0 16 12"><rect x="0.5" y="0.5" width="7" height="5" fill="#333" stroke="#999"/><rect x="8.5" y="0.5" width="7" height="5" fill="#ddd" stroke="#999"/><rect x="0.5" y="6.5" width="7" height="5" fill="#333" stroke="#999"/><rect x="8.5" y="6.5" width="7" height="5" fill="#333" stroke="#999"/><path d="M4 1.5V4.5M4 7.5V10.5M12 7.5V10.5" stroke="#ccc"/><path d="M10 3H14" stroke="#333"/></svg>
<svg style="left:4px;top:291px;" width="16" height="15" viewBox="0 0 16 15"><rect x="0.5" y="0.5" width="7" height="14" fill="#333" stroke="#999"/><rect x="8.5" y="0.5" width="7" height="14" fill="#ddd" stroke="#999"/><path d="M2 7.5H6M4 5.5V9.5" stroke="#ccc"/><path d="M10 7.5L12 5.5L14 7.5L12 9.5Z" fill="#333"/></svg>
<div style="left:2px;top:309px;width:19.5px;height:18.5px;background:#5285a6;"></div>
<svg style="left:3px;top:310px;" width="18" height="17" viewBox="0 0 18 17"><rect x="2" y="2" width="14" height="13" fill="#555" stroke="#bbb" stroke-width="0.8"/><path d="M4 4H13M6 7H13M6 10H13M6 13H13M5 4V13" stroke="#ddd" stroke-width="1"/><circle cx="6" cy="7" r="1" fill="#e59a55"/><circle cx="6" cy="10" r="1" fill="#e59a55"/></svg>
<svg style="left:0px;top:480px;" width="24" height="20" viewBox="0 0 24 20"><path d="M3 2.5H7.2L7.6 18H3Z" fill="#17a0aa"/><path d="M3.2 2H8.2L13.8 14.8H10.6Z" fill="#9ad6d8"/><path d="M10.6 14.8L15.5 2H20.2L13.8 14.8Z" fill="#1fb0b8"/><path d="M16 2.5H20.2V18H16Z" fill="#1db8c0"/><path d="M3 18L6 10L7.6 18Z" fill="#0e8590" opacity="0.7"/></svg>
<div style="left:23.5px;top:79.5px;width:2px;height:422px;background:#393939;"></div>
<div style="left:25.5px;top:79.5px;width:142px;height:422px;background:#424242;"></div>
<div style="left:59.5px;top:80px;width:108px;height:9px;background:#393939;"></div>
<div style="left:26px;top:80.7px;width:33.5px;height:9px;background:#444444;"></div>
<span style="left:31px;top:83.13px;font-size:6.7px;line-height:6.7px;color:#e2e2e2;transform:scaleX(0.980);-webkit-text-stroke:0.1px #e2e2e2;">Outliner</span>
<div style="left:25.5px;top:89px;width:142px;height:13px;background:#444444;"></div>
<span style="left:30.8px;top:93.08px;font-size:6.4px;line-height:6.4px;color:#d0d0d0;transform:scaleX(0.929);-webkit-text-stroke:0.1px #d0d0d0;">Display</span>
<span style="left:57.5px;top:93.08px;font-size:6.4px;line-height:6.4px;color:#d0d0d0;transform:scaleX(0.937);-webkit-text-stroke:0.1px #d0d0d0;">Show</span>
<span style="left:81.5px;top:93.08px;font-size:6.4px;line-height:6.4px;color:#d0d0d0;transform:scaleX(0.912);-webkit-text-stroke:0.1px #d0d0d0;">Help</span>
<svg style="left:28.5px;top:103px;" width="9" height="9" viewBox="0 0 9 9"><path d="M2 1H7M2 8H7M1 2V7M8 2V7" stroke="#666" stroke-width="0.9"/></svg>
<div style="left:41.3px;top:103.2px;width:122.7px;height:10px;background:#2b2b2b;"></div>
<span style="left:43px;top:106.37px;font-size:6.3px;line-height:6.3px;color:#7a7a7a;transform:scaleX(0.714);-webkit-text-stroke:0.1px #7a7a7a;">Search...</span>
<svg style="left:155px;top:105px;" width="8" height="5" viewBox="0 0 8 5"><path d="M0.5 0.5H7.5L4 4.5Z" fill="#ddd"/></svg>
<div style="left:27.5px;top:114px;width:131.5px;height:376.5px;background:#373737;"></div>
<div style="left:159px;top:114px;width:6px;height:376.5px;background:#373737;"></div>
<svg style="left:159px;top:114.5px;" width="7" height="6" viewBox="0 0 7 6"><path d="M0.5 4.5L3.5 1L6.5 4.5Z" fill="#ccc"/></svg>
<div style="left:159.3px;top:122px;width:5.4px;height:361px;background:#5b5b5b;border-radius:2.7px"></div>
<svg style="left:159px;top:484.5px;" width="6" height="4" viewBox="0 0 6 4"><path d="M0.5 0.5H5.5L3 3.5Z" fill="#ccc"/></svg>
<span style="left:55.8px;top:116.91px;font-size:6.6px;line-height:6.6px;color:#767676;transform:scaleX(0.900);-webkit-text-stroke:0.1px #767676;">persp</span>
<svg style="left:45.5px;top:116.5px;" width="9" height="6" viewBox="0 0 9 6"><rect x="0.5" y="0.8" width="5" height="4.2" fill="#d8d8d8"/><path d="M6 2.9L8.3 0.8V5Z" fill="#d8d8d8"/></svg>
<span style="left:55.8px;top:127.41px;font-size:6.6px;line-height:6.6px;color:#767676;transform:scaleX(0.900);-webkit-text-stroke:0.1px #767676;">top</span>
<svg style="left:45.5px;top:127px;" width="9" height="6" viewBox="0 0 9 6"><rect x="0.5" y="0.8" width="5" height="4.2" fill="#d8d8d8"/><path d="M6 2.9L8.3 0.8V5Z" fill="#d8d8d8"/></svg>
<span style="left:55.8px;top:138.01px;font-size:6.6px;line-height:6.6px;color:#767676;transform:scaleX(0.900);-webkit-text-stroke:0.1px #767676;">front</span>
<svg style="left:45.5px;top:137.6px;" width="9" height="6" viewBox="0 0 9 6"><rect x="0.5" y="0.8" width="5" height="4.2" fill="#d8d8d8"/><path d="M6 2.9L8.3 0.8V5Z" fill="#d8d8d8"/></svg>
<span style="left:55.8px;top:148.41px;font-size:6.6px;line-height:6.6px;color:#767676;transform:scaleX(0.900);-webkit-text-stroke:0.1px #767676;">side</span>
<svg style="left:45.5px;top:148px;" width="9" height="6" viewBox="0 0 9 6"><rect x="0.5" y="0.8" width="5" height="4.2" fill="#d8d8d8"/><path d="M6 2.9L8.3 0.8V5Z" fill="#d8d8d8"/></svg>
<span style="left:55.8px;top:159.41px;font-size:6.6px;line-height:6.6px;color:#e6e6e6;transform:scaleX(0.900);-webkit-text-stroke:0.1px #e6e6e6;">pTorus1</span>
<svg style="left:45px;top:157.5px;" width="10" height="9" viewBox="0 0 10 9"><path d="M5 0.3L7 2.5H3Z M5 8.7L7 6.5H3Z M0.3 4.5L2.5 2.5V6.5Z M9.7 4.5L7.5 2.5V6.5Z" fill="#e0e0e0"/><path d="M3.5 4.5H6.5M5 3V6" stroke="#bbb" stroke-width="0.8"/></svg>
<span style="left:55.8px;top:170.41px;font-size:6.6px;line-height:6.6px;color:#e6e6e6;transform:scaleX(0.900);-webkit-text-stroke:0.1px #e6e6e6;">pTorus2</span>
<svg style="left:45px;top:168.5px;" width="10" height="9" viewBox="0 0 10 9"><path d="M5 0.3L7 2.5H3Z M5 8.7L7 6.5H3Z M0.3 4.5L2.5 2.5V6.5Z M9.7 4.5L7.5 2.5V6.5Z" fill="#e0e0e0"/><path d="M3.5 4.5H6.5M5 3V6" stroke="#bbb" stroke-width="0.8"/></svg>
<span style="left:55.8px;top:180.91px;font-size:6.6px;line-height:6.6px;color:#e6e6e6;transform:scaleX(0.900);-webkit-text-stroke:0.1px #e6e6e6;">pCylinder2</span>
<svg style="left:45px;top:179.0px;" width="10" height="9" viewBox="0 0 10 9"><path d="M5 0.3L7 2.5H3Z M5 8.7L7 6.5H3Z M0.3 4.5L2.5 2.5V6.5Z M9.7 4.5L7.5 2.5V6.5Z" fill="#e0e0e0"/><path d="M3.5 4.5H6.5M5 3V6" stroke="#bbb" stroke-width="0.8"/></svg>
<span style="left:55.8px;top:191.41px;font-size:6.6px;line-height:6.6px;color:#e6e6e6;transform:scaleX(0.900);-webkit-text-stroke:0.1px #e6e6e6;">group</span>
<svg style="left:37px;top:191px;" width="6" height="6" viewBox="0 0 6 6"><rect x="0.5" y="0.5" width="5" height="5" fill="none" stroke="#8a8a8a" stroke-width="0.7"/><path d="M1 3H5M3 1V5" stroke="#8a8a8a" stroke-width="0.7"/></svg>
<svg style="left:45px;top:190px;" width="10" height="8" viewBox="0 0 10 8"><path d="M3 0.5H9.5L7 7.5H0.5Z" fill="#e0e0e0"/><path d="M0.5 4.2H5.5" stroke="#d83030" stroke-width="1.1"/><path d="M5 2.5L7.5 4.2L5 5.9Z" fill="#d83030"/></svg>
<span style="left:55.8px;top:202.41px;font-size:6.6px;line-height:6.6px;color:#e6e6e6;transform:scaleX(0.900);-webkit-text-stroke:0.1px #e6e6e6;">group1</span>
<svg style="left:37px;top:202px;" width="6" height="6" viewBox="0 0 6 6"><rect x="0.5" y="0.5" width="5" height="5" fill="none" stroke="#8a8a8a" stroke-width="0.7"/><path d="M1 3H5M3 1V5" stroke="#8a8a8a" stroke-width="0.7"/></svg>
<svg style="left:45px;top:201px;" width="10" height="8" viewBox="0 0 10 8"><path d="M3 0.5H9.5L7 7.5H0.5Z" fill="#e0e0e0"/><path d="M0.5 4.2H5.5" stroke="#d83030" stroke-width="1.1"/><path d="M5 2.5L7.5 4.2L5 5.9Z" fill="#d83030"/></svg>
<span style="left:55.8px;top:212.91px;font-size:6.6px;line-height:6.6px;color:#e6e6e6;transform:scaleX(0.900);-webkit-text-stroke:0.1px #e6e6e6;">defaultLightSet</span>
<svg style="left:45px;top:211.0px;" width="9" height="9" viewBox="0 0 9 9"><circle cx="4.5" cy="4.5" r="4" fill="none" stroke="#d0d0d0" stroke-width="0.9"/><path d="M4.5 1.8H7V5.5L5 6Z" fill="#3cb4c0"/><circle cx="3" cy="6" r="1.8" fill="#e0e0e0"/></svg>
<span style="left:55.8px;top:223.41px;font-size:6.6px;line-height:6.6px;color:#e6e6e6;transform:scaleX(0.900);-webkit-text-stroke:0.1px #e6e6e6;">defaultObjectSet</span>
<svg style="left:45px;top:221.5px;" width="9" height="9" viewBox="0 0 9 9"><circle cx="4.5" cy="4.5" r="4" fill="none" stroke="#d0d0d0" stroke-width="0.9"/><path d="M4.5 1.8H7V5.5L5 6Z" fill="#3cb4c0"/><circle cx="3" cy="6" r="1.8" fill="#e0e0e0"/></svg>
<div style="left:27.5px;top:490.3px;width:137.5px;height:5.5px;background:#373737;"></div>
<svg style="left:28px;top:490.5px;" width="5" height="6" viewBox="0 0 5 6"><path d="M4 0.5V5.5L0.5 3Z" fill="#ccc"/></svg>
<div style="left:33.5px;top:490.8px;width:118.2px;height:5.2px;background:#5c5c5c;border-radius:2.6px"></div>
<svg style="left:152.3px;top:490.5px;" width="5" height="6" viewBox="0 0 5 6"><path d="M0.8 0.5V5.5L4.2 3Z" fill="#ccc"/></svg>
<div style="left:167.2px;top:79.5px;width:1.8px;height:422px;background:#383838;"></div>
<div style="left:169px;top:81px;width:704px;height:419.5px;background:#444444;border:1.2px solid #646464;border-radius:1.5px"></div>
<div style="left:873px;top:79.5px;width:2px;height:422px;background:#3a3a3a;"></div>
<span style="left:174.25px;top:84.38px;font-size:6.4px;line-height:6.4px;color:#d0d0d0;transform:scaleX(0.872);-webkit-text-stroke:0.1px #d0d0d0;">View</span>
<span style="left:196px;top:84.38px;font-size:6.4px;line-height:6.4px;color:#d0d0d0;transform:scaleX(0.937);-webkit-text-stroke:0.1px #d0d0d0;">Shading</span>
<span style="left:226.75px;top:84.38px;font-size:6.4px;line-height:6.4px;color:#d0d0d0;transform:scaleX(1.004);-webkit-text-stroke:0.1px #d0d0d0;">Lighting</span>
<span style="left:257.5px;top:84.38px;font-size:6.4px;line-height:6.4px;color:#d0d0d0;transform:scaleX(0.875);-webkit-text-stroke:0.1px #d0d0d0;">Show</span>
<span style="left:281px;top:84.38px;font-size:6.4px;line-height:6.4px;color:#d0d0d0;transform:scaleX(0.937);-webkit-text-stroke:0.1px #d0d0d0;">Renderer</span>
<span style="left:314.25px;top:84.38px;font-size:6.4px;line-height:6.4px;color:#d0d0d0;transform:scaleX(0.920);-webkit-text-stroke:0.1px #d0d0d0;">Panels</span>
<div style="left:170.2px;top:102px;width:701.6px;height:396.8px;background:#5c5c5c;"></div>
<svg style="left:0;top:0" width="1024" height="576" viewBox="0 0 1024 576">
<rect x="190.37" y="102" width="1" height="396.8" fill="#474747"/><rect x="227.34" y="102" width="1" height="396.8" fill="#474747"/><rect x="264.31" y="102" width="1" height="396.8" fill="#474747"/><rect x="301.28" y="102" width="1" height="396.8" fill="#474747"/><rect x="338.25" y="102" width="1" height="396.8" fill="#474747"/><rect x="375.22" y="102" width="1" height="396.8" fill="#474747"/><rect x="412.19" y="102" width="1" height="396.8" fill="#474747"/><rect x="449.16" y="102" width="1" height="396.8" fill="#474747"/><rect x="486.13" y="102" width="1" height="396.8" fill="#474747"/><rect x="523.10" y="102" width="1" height="396.8" fill="#474747"/><rect x="560.07" y="102" width="1" height="396.8" fill="#474747"/><rect x="597.04" y="102" width="1" height="396.8" fill="#474747"/><rect x="634.01" y="102" width="1" height="396.8" fill="#474747"/><rect x="670.98" y="102" width="1" height="396.8" fill="#474747"/><rect x="707.95" y="102" width="1" height="396.8" fill="#474747"/><rect x="744.92" y="102" width="1" height="396.8" fill="#474747"/><rect x="781.89" y="102" width="1" height="396.8" fill="#474747"/><rect x="818.86" y="102" width="1" height="396.8" fill="#474747"/><rect x="855.83" y="102" width="1" height="396.8" fill="#474747"/><rect x="170.2" y="138.05" width="701.6" height="1" fill="#474747"/><rect x="170.2" y="175.02" width="701.6" height="1" fill="#474747"/><rect x="170.2" y="211.99" width="701.6" height="1" fill="#474747"/><rect x="170.2" y="248.96" width="701.6" height="1" fill="#474747"/><rect x="170.2" y="285.93" width="701.6" height="1" fill="#474747"/><rect x="170.2" y="322.90" width="701.6" height="1" fill="#474747"/><rect x="170.2" y="359.87" width="701.6" height="1" fill="#474747"/><rect x="170.2" y="396.84" width="701.6" height="1" fill="#474747"/><rect x="170.2" y="433.81" width="701.6" height="1" fill="#474747"/><rect x="170.2" y="470.78" width="701.6" height="1" fill="#474747"/></svg>
<div style="left:875px;top:79.5px;width:139.5px;height:422px;background:#444444;"></div>
<svg style="left:982px;top:81px;" width="10" height="9" viewBox="0 0 10 9"><path d="M5 0.5L6.5 3H3.5Z" fill="#6c6"/><path d="M2 5.5L3.5 8H0.5Z" fill="#47f"/><path d="M8 5.5L9.5 8H6.5Z" fill="#e44"/><rect x="4" y="4" width="2" height="2" fill="#ccc"/></svg>
<svg style="left:993px;top:81px;" width="9" height="9" viewBox="0 0 9 9"><path d="M1.6 8A3.4 3.6 0 1 1 7.6 6.5" stroke="#3cb4c0" stroke-width="2" fill="none"/><path d="M5 6.5L7.5 8.3" stroke="#999" stroke-width="1"/></svg>
<svg style="left:1004.5px;top:81px;" width="9" height="9" viewBox="0 0 9 9"><path d="M0.8 0.8V8.2H8" stroke="#888" stroke-width="0.9" fill="none"/><path d="M2.5 6.5L7.5 1.5" stroke="#3cb4c0" stroke-width="1.3"/><path d="M5.5 1H8V3.5Z" fill="#3cb4c0"/></svg>
<span style="left:881.7px;top:94.48px;font-size:6.4px;line-height:6.4px;color:#d0d0d0;transform:scaleX(0.947);-webkit-text-stroke:0.1px #d0d0d0;">Channels</span>
<span style="left:914.9px;top:94.48px;font-size:6.4px;line-height:6.4px;color:#d0d0d0;transform:scaleX(0.997);-webkit-text-stroke:0.1px #d0d0d0;">Edit</span>
<span style="left:933.8px;top:94.48px;font-size:6.4px;line-height:6.4px;color:#d0d0d0;transform:scaleX(0.973);-webkit-text-stroke:0.1px #d0d0d0;">Object</span>
<span style="left:959.7px;top:94.48px;font-size:6.4px;line-height:6.4px;color:#d0d0d0;transform:scaleX(0.906);-webkit-text-stroke:0.1px #d0d0d0;">Show</span>
<div style="left:878px;top:103px;width:135.5px;height:272px;background:#2b2b2b;"></div>
<svg style="left:922px;top:375.5px" width="44" height="2" fill="#666" shape-rendering="crispEdges"><rect x="0" y="0" width="1" height="1"/><rect x="2" y="0" width="1" height="1"/><rect x="4" y="0" width="1" height="1"/><rect x="6" y="0" width="1" height="1"/><rect x="8" y="0" width="1" height="1"/><rect x="10" y="0" width="1" height="1"/><rect x="12" y="0" width="1" height="1"/><rect x="14" y="0" width="1" height="1"/><rect x="16" y="0" width="1" height="1"/><rect x="18" y="0" width="1" height="1"/><rect x="20" y="0" width="1" height="1"/><rect x="22" y="0" width="1" height="1"/><rect x="24" y="0" width="1" height="1"/><rect x="26" y="0" width="1" height="1"/><rect x="28" y="0" width="1" height="1"/><rect x="30" y="0" width="1" height="1"/><rect x="32" y="0" width="1" height="1"/><rect x="34" y="0" width="1" height="1"/><rect x="36" y="0" width="1" height="1"/><rect x="38" y="0" width="1" height="1"/><rect x="40" y="0" width="1" height="1"/><rect x="42" y="0" width="1" height="1"/></svg>
<div style="left:878px;top:381px;width:135.5px;height:34.5px;background:#444444;"></div>
<div style="left:878px;top:381.5px;width:135.5px;height:1px;background:#3a3a3a;"></div>
<div style="left:879px;top:382.5px;width:132.5px;height:8.5px;background:#3a3a3a;"></div>
<div style="left:879px;top:383px;width:30.3px;height:8.5px;background:#444444;border-radius:1.5px 1.5px 0 0"></div>
<span style="left:883.5px;top:385.38px;font-size:6.4px;line-height:6.4px;color:#e0e0e0;transform:scaleX(0.929);-webkit-text-stroke:0.1px #e0e0e0;">Display</span>
<div style="left:911px;top:383px;width:24.5px;height:8px;background:#3e3e3e;border-radius:1.5px 1.5px 0 0"></div>
<span style="left:916px;top:385.38px;font-size:6.4px;line-height:6.4px;color:#858585;transform:scaleX(0.892);-webkit-text-stroke:0.1px #858585;">Anim</span>
<span style="left:883px;top:394.08px;font-size:6.4px;line-height:6.4px;color:#d0d0d0;transform:scaleX(0.833);-webkit-text-stroke:0.1px #d0d0d0;">Layers</span>
<span style="left:907.5px;top:394.08px;font-size:6.4px;line-height:6.4px;color:#d0d0d0;transform:scaleX(0.952);-webkit-text-stroke:0.1px #d0d0d0;">Options</span>
<span style="left:937.5px;top:394.08px;font-size:6.4px;line-height:6.4px;color:#d0d0d0;transform:scaleX(0.988);-webkit-text-stroke:0.1px #d0d0d0;">Help</span>
<svg style="left:961.5px;top:405px;" width="9" height="7" viewBox="0 0 9 7"><path d="M0.5 3.5L5.5 0.5V6.5Z" fill="#ddd"/><path d="M7 1.5V6M5.5 3L7 1.5L8.5 3" stroke="#3cb4c0" stroke-width="1" fill="none"/></svg>
<svg style="left:973.5px;top:405px;" width="9" height="7" viewBox="0 0 9 7"><path d="M0.5 3.5L5.5 0.5V6.5Z" fill="#ddd"/><rect x="5.5" y="2" width="3" height="4" fill="#3cb4c0"/></svg>
<svg style="left:987.5px;top:404px;" width="9" height="8" viewBox="0 0 9 8"><path d="M0.5 4.5L4.5 2.5L7 5L3 7Z" fill="#ddd"/><path d="M6.5 0.5V4M4.8 2.2H8.3" stroke="#3cb4c0" stroke-width="1"/></svg>
<svg style="left:999.5px;top:404px;" width="9" height="8" viewBox="0 0 9 8"><path d="M0.5 4.5L4.5 2.5L7 5L3 7Z" fill="#ddd"/><circle cx="6.5" cy="2.5" r="1.8" fill="#3cb4c0"/></svg>
<div style="left:877px;top:380.5px;width:137px;height:119.5px;background:transparent;border:1px solid #3a3a3a;border-radius:2px"></div>
<div style="left:879px;top:415.5px;width:132.5px;height:76px;background:#2b2b2b;"></div>
<div style="left:879px;top:491.5px;width:132.5px;height:6.5px;background:#333;"></div>
<svg style="left:880px;top:492px;" width="5" height="6" viewBox="0 0 5 6"><path d="M4 0.5V5.5L0.5 3Z" fill="#ccc"/></svg>
<div style="left:886.5px;top:492px;width:82px;height:5.5px;background:#5c5c5c;border-radius:3px"></div>
<svg style="left:1006px;top:492px;" width="5" height="6" viewBox="0 0 5 6"><path d="M1 0.5V5.5L4.5 3Z" fill="#ccc"/></svg>
<div style="left:1014.5px;top:79.5px;width:9.5px;height:422px;background:#3b3b3b;"></div>
<div style="left:1014.5px;top:81px;width:9.5px;height:80.3px;background:#454545;"></div>
<span style="left:1014.7px;top:85.8px;font-size:6.5px;line-height:6.5px;color:#e4e4e4;font-weight:bold;transform-origin:0 0;transform:translateX(6.5px) rotate(90deg) scaleX(0.857)">Channel Box / Layer Editor</span>
<div style="left:1014.5px;top:163px;width:9.5px;height:58px;background:#3f3f3f;"></div>
<span style="left:1014.7px;top:169px;font-size:6.5px;line-height:6.5px;color:#8a8a8a;transform-origin:0 0;transform:translateX(6.5px) rotate(90deg) scaleX(1.020)">Modeling Toolkit</span>
<div style="left:1014.5px;top:223px;width:9.5px;height:56.6px;background:#3f3f3f;"></div>
<span style="left:1014.7px;top:227.7px;font-size:6.5px;line-height:6.5px;color:#8a8a8a;transform-origin:0 0;transform:translateX(6.5px) rotate(90deg) scaleX(1.051)">Attribute Editor</span>
<div style="left:0px;top:501.5px;width:1024px;height:2.5px;background:#363636;"></div>
<div style="left:0px;top:504px;width:1024px;height:19px;background:#444444;"></div>
<svg style="left:1px;top:505px" width="4" height="17" fill="#525252" shape-rendering="crispEdges"><rect x="0" y="0" width="1" height="1"/><rect x="2" y="0" width="1" height="1"/><rect x="0" y="2" width="1" height="1"/><rect x="2" y="2" width="1" height="1"/><rect x="0" y="4" width="1" height="1"/><rect x="2" y="4" width="1" height="1"/><rect x="0" y="6" width="1" height="1"/><rect x="2" y="6" width="1" height="1"/><rect x="0" y="8" width="1" height="1"/><rect x="2" y="8" width="1" height="1"/><rect x="0" y="10" width="1" height="1"/><rect x="2" y="10" width="1" height="1"/><rect x="0" y="12" width="1" height="1"/><rect x="2" y="12" width="1" height="1"/><rect x="0" y="14" width="1" height="1"/><rect x="2" y="14" width="1" height="1"/><rect x="0" y="16" width="1" height="1"/><rect x="2" y="16" width="1" height="1"/></svg>
<div style="left:7px;top:505px;width:859.5px;height:17px;background:#2b2b2b;"></div>
<div style="left:12px;top:505px;width:5.5px;height:17px;background:#4e4e4e;"></div>
<span style="left:12.5px;top:513.97px;font-size:6.3px;line-height:6.3px;color:#d8d8d8;transform:scaleX(0.900);-webkit-text-stroke:0.1px #d8d8d8;">1</span>
<div style="left:38.9px;top:512px;width:1.2px;height:8px;background:#8e8e8e;"></div>
<span style="left:40.8px;top:505.47px;font-size:6.3px;line-height:6.3px;color:#8a8a8a;transform:scaleX(0.900);-webkit-text-stroke:0.1px #8a8a8a;">5</span>
<div style="left:74.38000000000001px;top:512px;width:1.2px;height:8px;background:#8e8e8e;"></div>
<span style="left:76.28px;top:505.47px;font-size:6.3px;line-height:6.3px;color:#8a8a8a;transform:scaleX(0.900);-webkit-text-stroke:0.1px #8a8a8a;">10</span>
<div style="left:109.86000000000001px;top:512px;width:1.2px;height:8px;background:#8e8e8e;"></div>
<span style="left:111.76px;top:505.47px;font-size:6.3px;line-height:6.3px;color:#8a8a8a;transform:scaleX(0.900);-webkit-text-stroke:0.1px #8a8a8a;">15</span>
<div style="left:145.34px;top:512px;width:1.2px;height:8px;background:#8e8e8e;"></div>
<span style="left:147.24px;top:505.47px;font-size:6.3px;line-height:6.3px;color:#8a8a8a;transform:scaleX(0.900);-webkit-text-stroke:0.1px #8a8a8a;">20</span>
<div style="left:180.82000000000002px;top:512px;width:1.2px;height:8px;background:#8e8e8e;"></div>
<span style="left:182.72000000000003px;top:505.47px;font-size:6.3px;line-height:6.3px;color:#8a8a8a;transform:scaleX(0.900);-webkit-text-stroke:0.1px #8a8a8a;">25</span>
<div style="left:216.3px;top:512px;width:1.2px;height:8px;background:#8e8e8e;"></div>
<span style="left:218.20000000000002px;top:505.47px;font-size:6.3px;line-height:6.3px;color:#8a8a8a;transform:scaleX(0.900);-webkit-text-stroke:0.1px #8a8a8a;">30</span>
<div style="left:251.78px;top:512px;width:1.2px;height:8px;background:#8e8e8e;"></div>
<span style="left:253.68px;top:505.47px;font-size:6.3px;line-height:6.3px;color:#8a8a8a;transform:scaleX(0.900);-webkit-text-stroke:0.1px #8a8a8a;">35</span>
<div style="left:287.26px;top:512px;width:1.2px;height:8px;background:#8e8e8e;"></div>
<span style="left:289.16px;top:505.47px;font-size:6.3px;line-height:6.3px;color:#8a8a8a;transform:scaleX(0.900);-webkit-text-stroke:0.1px #8a8a8a;">40</span>
<div style="left:322.74px;top:512px;width:1.2px;height:8px;background:#8e8e8e;"></div>
<span style="left:324.64000000000004px;top:505.47px;font-size:6.3px;line-height:6.3px;color:#8a8a8a;transform:scaleX(0.900);-webkit-text-stroke:0.1px #8a8a8a;">45</span>
<div style="left:358.21999999999997px;top:512px;width:1.2px;height:8px;background:#8e8e8e;"></div>
<span style="left:360.12px;top:505.47px;font-size:6.3px;line-height:6.3px;color:#8a8a8a;transform:scaleX(0.900);-webkit-text-stroke:0.1px #8a8a8a;">50</span>
<div style="left:393.7px;top:512px;width:1.2px;height:8px;background:#8e8e8e;"></div>
<span style="left:395.6px;top:505.47px;font-size:6.3px;line-height:6.3px;color:#8a8a8a;transform:scaleX(0.900);-webkit-text-stroke:0.1px #8a8a8a;">55</span>
<div style="left:429.18px;top:512px;width:1.2px;height:8px;background:#8e8e8e;"></div>
<span style="left:431.08000000000004px;top:505.47px;font-size:6.3px;line-height:6.3px;color:#8a8a8a;transform:scaleX(0.900);-webkit-text-stroke:0.1px #8a8a8a;">60</span>
<div style="left:464.65999999999997px;top:512px;width:1.2px;height:8px;background:#8e8e8e;"></div>
<span style="left:466.56px;top:505.47px;font-size:6.3px;line-height:6.3px;color:#8a8a8a;transform:scaleX(0.900);-webkit-text-stroke:0.1px #8a8a8a;">65</span>
<div style="left:500.14px;top:512px;width:1.2px;height:8px;background:#8e8e8e;"></div>
<span style="left:502.04px;top:505.47px;font-size:6.3px;line-height:6.3px;color:#8a8a8a;transform:scaleX(0.900);-webkit-text-stroke:0.1px #8a8a8a;">70</span>
<div style="left:535.62px;top:512px;width:1.2px;height:8px;background:#8e8e8e;"></div>
<span style="left:537.52px;top:505.47px;font-size:6.3px;line-height:6.3px;color:#8a8a8a;transform:scaleX(0.900);-webkit-text-stroke:0.1px #8a8a8a;">75</span>
<div style="left:571.1px;top:512px;width:1.2px;height:8px;background:#8e8e8e;"></div>
<span style="left:573.0px;top:505.47px;font-size:6.3px;line-height:6.3px;color:#8a8a8a;transform:scaleX(0.900);-webkit-text-stroke:0.1px #8a8a8a;">80</span>
<div style="left:606.58px;top:512px;width:1.2px;height:8px;background:#8e8e8e;"></div>
<span style="left:608.48px;top:505.47px;font-size:6.3px;line-height:6.3px;color:#8a8a8a;transform:scaleX(0.900);-webkit-text-stroke:0.1px #8a8a8a;">85</span>
<div style="left:642.06px;top:512px;width:1.2px;height:8px;background:#8e8e8e;"></div>
<span style="left:643.9599999999999px;top:505.47px;font-size:6.3px;line-height:6.3px;color:#8a8a8a;transform:scaleX(0.900);-webkit-text-stroke:0.1px #8a8a8a;">90</span>
<div style="left:677.54px;top:512px;width:1.2px;height:8px;background:#8e8e8e;"></div>
<span style="left:679.4399999999999px;top:505.47px;font-size:6.3px;line-height:6.3px;color:#8a8a8a;transform:scaleX(0.900);-webkit-text-stroke:0.1px #8a8a8a;">95</span>
<div style="left:713.02px;top:512px;width:1.2px;height:8px;background:#8e8e8e;"></div>
<span style="left:714.92px;top:505.47px;font-size:6.3px;line-height:6.3px;color:#8a8a8a;transform:scaleX(0.900);-webkit-text-stroke:0.1px #8a8a8a;">100</span>
<div style="left:748.5px;top:512px;width:1.2px;height:8px;background:#8e8e8e;"></div>
<span style="left:750.4px;top:505.47px;font-size:6.3px;line-height:6.3px;color:#8a8a8a;transform:scaleX(0.900);-webkit-text-stroke:0.1px #8a8a8a;">105</span>
<div style="left:783.98px;top:512px;width:1.2px;height:8px;background:#8e8e8e;"></div>
<span style="left:785.88px;top:505.47px;font-size:6.3px;line-height:6.3px;color:#8a8a8a;transform:scaleX(0.900);-webkit-text-stroke:0.1px #8a8a8a;">110</span>
<div style="left:819.46px;top:512px;width:1.2px;height:8px;background:#8e8e8e;"></div>
<span style="left:821.36px;top:505.47px;font-size:6.3px;line-height:6.3px;color:#8a8a8a;transform:scaleX(0.900);-webkit-text-stroke:0.1px #8a8a8a;">115</span>
<div style="left:854.9399999999999px;top:512px;width:1.2px;height:8px;background:#8e8e8e;"></div>
<span style="left:856.8399999999999px;top:505.47px;font-size:6.3px;line-height:6.3px;color:#8a8a8a;transform:scaleX(0.900);-webkit-text-stroke:0.1px #8a8a8a;">120</span>
<div style="left:870px;top:507.5px;width:47px;height:10.5px;background:#2b2b2b;"></div>
<span style="left:872.5px;top:511.27px;font-size:6.3px;line-height:6.3px;color:#c8c8c8;transform:scaleX(0.900);-webkit-text-stroke:0.1px #c8c8c8;">1</span>
<svg style="left:923.0px;top:508px;" width="9" height="9" viewBox="0 0 9 9"><path d="M1 1.5V7.5M8 1.5L4.5 4.5L8 7.5ZM4.5 1.5L1.5 4.5L4.5 7.5Z" stroke="#bbb" fill="#bbb" stroke-width="0.8"/></svg>
<svg style="left:935.2px;top:508px;" width="9" height="9" viewBox="0 0 9 9"><path d="M1.5 1V8M8 1.5L3 4.5L8 7.5Z" stroke="#bbb" fill="#bbb" stroke-width="0.8"/></svg>
<svg style="left:947.4px;top:508px;" width="9" height="9" viewBox="0 0 9 9"><path d="M2 0.5V8.5" stroke="#e07a2f" stroke-width="1.3"/><path d="M8.5 1.5L3.5 4.5L8.5 7.5Z" fill="#bbb"/></svg>
<svg style="left:959.6px;top:508px;" width="9" height="9" viewBox="0 0 9 9"><path d="M8 0.5L1 4.5L8 8.5Z" fill="#bbb"/></svg>
<svg style="left:971.8px;top:508px;" width="9" height="9" viewBox="0 0 9 9"><path d="M1 0.5L8 4.5L1 8.5Z" fill="#bbb"/></svg>
<svg style="left:984.0px;top:508px;" width="9" height="9" viewBox="0 0 9 9"><path d="M0.5 1.5L5.5 4.5L0.5 7.5Z" fill="#bbb"/><path d="M7 0.5V8.5" stroke="#e07a2f" stroke-width="1.3"/></svg>
<svg style="left:996.2px;top:508px;" width="9" height="9" viewBox="0 0 9 9"><path d="M7.5 1V8M1 1.5L6 4.5L1 7.5Z" stroke="#bbb" fill="#bbb" stroke-width="0.8"/></svg>
<svg style="left:1008.4px;top:508px;" width="9" height="9" viewBox="0 0 9 9"><path d="M8 1.5V7.5M1 1.5L4.5 4.5L1 7.5ZM4.5 1.5L7.5 4.5L4.5 7.5Z" stroke="#bbb" fill="#bbb" stroke-width="0.8"/></svg>
<div style="left:0px;top:523px;width:1024px;height:21px;background:#444444;"></div>
<div style="left:0px;top:523px;width:1024px;height:1px;background:#3a3a3a;"></div>
<svg style="left:1px;top:525px" width="4" height="18" fill="#525252" shape-rendering="crispEdges"><rect x="0" y="0" width="1" height="1"/><rect x="2" y="0" width="1" height="1"/><rect x="0" y="2" width="1" height="1"/><rect x="2" y="2" width="1" height="1"/><rect x="0" y="4" width="1" height="1"/><rect x="2" y="4" width="1" height="1"/><rect x="0" y="6" width="1" height="1"/><rect x="2" y="6" width="1" height="1"/><rect x="0" y="8" width="1" height="1"/><rect x="2" y="8" width="1" height="1"/><rect x="0" y="10" width="1" height="1"/><rect x="2" y="10" width="1" height="1"/><rect x="0" y="12" width="1" height="1"/><rect x="2" y="12" width="1" height="1"/><rect x="0" y="14" width="1" height="1"/><rect x="2" y="14" width="1" height="1"/><rect x="0" y="16" width="1" height="1"/><rect x="2" y="16" width="1" height="1"/></svg>
<div style="left:8px;top:528px;width:46px;height:12.5px;background:#2b2b2b;"></div>
<span style="left:10.5px;top:533.17px;font-size:6.3px;line-height:6.3px;color:#c8c8c8;transform:scaleX(0.900);-webkit-text-stroke:0.1px #c8c8c8;">1</span>
<div style="left:59px;top:528px;width:46px;height:12.5px;background:#2b2b2b;"></div>
<span style="left:61.5px;top:533.17px;font-size:6.3px;line-height:6.3px;color:#c8c8c8;transform:scaleX(0.900);-webkit-text-stroke:0.1px #c8c8c8;">1</span>
<div style="left:111.5px;top:528.5px;width:488.5px;height:12px;background:#3c3c3c;border-radius:2px"></div>
<div style="left:112.5px;top:529px;width:296px;height:11px;background:#5a5a5a;border-radius:2px"></div>
<div style="left:113.5px;top:530.5px;width:7.5px;height:7.5px;background:#a0a0a0;border-radius:1.5px"></div>
<span style="left:124px;top:533.17px;font-size:6.3px;line-height:6.3px;color:#d0d0d0;transform:scaleX(0.900);-webkit-text-stroke:0.1px #d0d0d0;">1</span>
<span style="left:387.5px;top:533.17px;font-size:6.3px;line-height:6.3px;color:#d0d0d0;transform:scaleX(0.951);-webkit-text-stroke:0.1px #d0d0d0;">120</span>
<div style="left:399.5px;top:530.5px;width:7.5px;height:7.5px;background:#a0a0a0;border-radius:1.5px"></div>
<div style="left:604px;top:528px;width:46px;height:12.5px;background:#2b2b2b;"></div>
<span style="left:606.5px;top:533.17px;font-size:6.3px;line-height:6.3px;color:#c8c8c8;transform:scaleX(0.951);-webkit-text-stroke:0.1px #c8c8c8;">120</span>
<div style="left:655px;top:528px;width:46px;height:12.5px;background:#2b2b2b;"></div>
<span style="left:657px;top:533.17px;font-size:6.3px;line-height:6.3px;color:#c8c8c8;transform:scaleX(0.951);-webkit-text-stroke:0.1px #c8c8c8;">200</span>
<div style="left:704.5px;top:529px;width:1.6px;height:10px;background:linear-gradient(#4a4a4a,#888 30%,#888 70%,#4a4a4a)"></div>
<svg style="left:712px;top:529px;" width="10" height="11" viewBox="0 0 10 11"><path d="M1 1H6V10L3.5 8L1 10Z" fill="#e8703a"/><path d="M7 1.5V5.5M5 3.5H9" stroke="#ddd" stroke-width="1.1"/></svg>
<div style="left:727.0px;top:529px;width:1.6px;height:10px;background:linear-gradient(#4a4a4a,#888 30%,#888 70%,#4a4a4a)"></div>
<svg style="left:735px;top:531px;" width="5" height="4" viewBox="0 0 5 4"><path d="M0.5 0.5H4.5L2.5 3Z" fill="#999"/></svg>
<div style="left:745.3px;top:528px;width:54px;height:13px;background:#3f3f3f;"></div>
<span style="left:748px;top:532.97px;font-size:6.3px;line-height:6.3px;color:#cfcfcf;transform:scaleX(0.935);-webkit-text-stroke:0.1px #cfcfcf;">No Character Set</span>
<svg style="left:806px;top:531px;" width="5" height="4" viewBox="0 0 5 4"><path d="M0.5 0.5H4.5L2.5 3Z" fill="#999"/></svg>
<div style="left:814px;top:528px;width:53px;height:13px;background:#3f3f3f;"></div>
<span style="left:817px;top:532.97px;font-size:6.3px;line-height:6.3px;color:#cfcfcf;transform:scaleX(0.944);-webkit-text-stroke:0.1px #cfcfcf;">No Anim Layer</span>
<div style="left:873.5px;top:530px;width:1.6px;height:10px;background:linear-gradient(#4a4a4a,#888 30%,#888 70%,#4a4a4a)"></div>
<div style="left:881px;top:529px;width:40px;height:10.5px;background:#555555;"></div>
<div style="left:921px;top:529px;width:11px;height:10.5px;background:#5a5a5a;"></div>
<svg style="left:922px;top:531.5px;" width="9" height="6" viewBox="0 0 9 6"><path d="M1 1H8L4.5 4.5Z" fill="#ddd"/></svg>
<span style="left:882.5px;top:532.67px;font-size:6.3px;line-height:6.3px;color:#cfcfcf;transform:scaleX(0.932);-webkit-text-stroke:0.1px #cfcfcf;">24 fps</span>
<svg style="left:938px;top:529px;" width="10" height="10" viewBox="0 0 10 10"><path d="M2 4.5H8L6.5 3M8 6H2L3.5 7.5" stroke="#ddd" stroke-width="1.1" fill="none"/><path d="M1 3A2 2 0 0 1 3 1.5M9 7A2 2 0 0 1 7 8.5" stroke="#ddd" fill="none"/></svg>
<div style="left:953px;top:528.5px;width:10.5px;height:12px;background:#5285a6;"></div>
<svg style="left:954px;top:530px;" width="9" height="9" viewBox="0 0 9 9"><rect x="0.5" y="2" width="8" height="6" fill="#d0763a"/><path d="M2 3.5V6.5M4.5 3.5V6.5M7 3.5V6.5" stroke="#eee" stroke-width="0.8"/><path d="M6 0.5H8.5V2.5" stroke="#ddd" fill="none"/></svg>
<div style="left:969.5px;top:530px;width:1.6px;height:10px;background:linear-gradient(#4a4a4a,#888 30%,#888 70%,#4a4a4a)"></div>
<svg style="left:975px;top:529px;" width="10" height="10" viewBox="0 0 10 10"><path d="M1 3.5H3L6 1V9L3 6.5H1Z" fill="#ccc"/><path d="M7.5 3Q9 5 7.5 7" stroke="#999" fill="none"/></svg>
<svg style="left:990px;top:529px;" width="10" height="10" viewBox="0 0 10 10"><circle cx="5" cy="5" r="4" fill="none" stroke="#bbb" stroke-width="0.9"/><path d="M5 2V7" stroke="#e07a2f" stroke-width="1.2"/></svg>
<svg style="left:1008px;top:528px;" width="12" height="12" viewBox="0 0 12 12"><circle cx="3" cy="2.5" r="1.8" fill="none" stroke="#ccc" stroke-width="0.8"/><path d="M5 6L8 4L10 6L7 9L9 11M7 9L4 10" stroke="#e8703a" stroke-width="1.4" fill="none"/><circle cx="9" cy="3" r="1.2" fill="#e8703a"/></svg>
<div style="left:0px;top:544px;width:1024px;height:17px;background:#444444;"></div>
<div style="left:0px;top:544px;width:1024px;height:1px;background:#3a3a3a;"></div>
<svg style="left:1px;top:546px" width="4" height="14" fill="#525252" shape-rendering="crispEdges"><rect x="0" y="0" width="1" height="1"/><rect x="2" y="0" width="1" height="1"/><rect x="0" y="2" width="1" height="1"/><rect x="2" y="2" width="1" height="1"/><rect x="0" y="4" width="1" height="1"/><rect x="2" y="4" width="1" height="1"/><rect x="0" y="6" width="1" height="1"/><rect x="2" y="6" width="1" height="1"/><rect x="0" y="8" width="1" height="1"/><rect x="2" y="8" width="1" height="1"/><rect x="0" y="10" width="1" height="1"/><rect x="2" y="10" width="1" height="1"/><rect x="0" y="12" width="1" height="1"/><rect x="2" y="12" width="1" height="1"/></svg>
<span style="left:12.5px;top:551.58px;font-size:6.4px;line-height:6.4px;color:#d8d8d8;transform:scaleX(0.874);-webkit-text-stroke:0.1px #d8d8d8;">MEL</span>
<div style="left:31.7px;top:547.7px;width:355px;height:11.5px;background:#2b2b2b;border-radius:2px"></div>
<div style="left:389px;top:547.7px;width:617px;height:11.5px;background:#2b2b2b;border-radius:2px"></div>
<svg style="left:1008px;top:547px;" width="12" height="12" viewBox="0 0 12 12"><rect x="1" y="1" width="10" height="10" fill="#777"/><rect x="2" y="3" width="8" height="7" fill="#ddd"/><path d="M4 4V9M8 4V9M5 6.5H7" stroke="#555" stroke-width="0.8"/></svg>
<div style="left:0px;top:561px;width:1024px;height:14px;background:#444444;"></div>
<svg style="left:1px;top:562px" width="4" height="13" fill="#525252" shape-rendering="crispEdges"><rect x="0" y="0" width="1" height="1"/><rect x="2" y="0" width="1" height="1"/><rect x="0" y="2" width="1" height="1"/><rect x="2" y="2" width="1" height="1"/><rect x="0" y="4" width="1" height="1"/><rect x="2" y="4" width="1" height="1"/><rect x="0" y="6" width="1" height="1"/><rect x="2" y="6" width="1" height="1"/><rect x="0" y="8" width="1" height="1"/><rect x="2" y="8" width="1" height="1"/><rect x="0" y="10" width="1" height="1"/><rect x="2" y="10" width="1" height="1"/><rect x="0" y="12" width="1" height="1"/><rect x="2" y="12" width="1" height="1"/></svg>
<span style="left:13px;top:567.42px;font-size:6px;line-height:6px;color:#c0c0c0;transform:scaleX(0.848);-webkit-text-stroke:0.1px #c0c0c0;">Select Tool: select an object</span>
<div style="left:0px;top:575px;width:1024px;height:1px;background:#262626;"></div>
<div style="left:26px;top:575px;width:183px;height:1px;background:#eeeeee;"></div>
<svg style="left:0;top:0" width="1024" height="576" viewBox="0 0 1024 576"><path d="M582.30 115L539.50 228M582.05 115L539.38 228M581.31 115L539.03 228M580.07 115L538.45 228M578.35 115L537.64 228M576.15 115L536.61 228M573.49 115L535.36 228M570.39 115L533.90 228M566.87 115L532.24 228M562.94 115L530.40 228M558.63 115L528.37 228M553.98 115L526.18 228M548.99 115L523.84 228M543.72 115L521.35 228M538.18 115L518.75 228M532.42 115L516.04 228M526.47 115L513.24 228M520.36 115L510.37 228M514.14 115L507.44 228M507.84 115L504.48 228M501.50 115L501.50 228M495.16 115L498.52 228M488.86 115L495.56 228M482.64 115L492.63 228M476.53 115L489.76 228M470.58 115L486.96 228M464.82 115L484.25 228M459.28 115L481.65 228M454.01 115L479.16 228M449.02 115L476.82 228M444.37 115L474.63 228M440.06 115L472.60 228M436.13 115L470.76 228M432.61 115L469.10 228M429.51 115L467.64 228M426.85 115L466.39 228M424.65 115L465.36 228M422.93 115L464.55 228M421.69 115L463.97 228M420.95 115L463.62 228M420.70 115L463.50 228" stroke="#00006c" stroke-width="0.75" stroke-opacity="0.9" fill="none"/><path d="M578.50 115L536.50 228M578.26 115L536.39 228M577.55 115L536.07 228M576.37 115L535.53 228M574.73 115L534.79 228M572.64 115L533.84 228M570.11 115L532.69 228M567.15 115L531.34 228M563.79 115L529.82 228M560.05 115L528.11 228M555.95 115L526.25 228M551.51 115L524.23 228M546.76 115L522.07 228M541.73 115L519.79 228M536.46 115L517.39 228M530.97 115L514.89 228M525.29 115L512.32 228M519.48 115L509.67 228M513.55 115L506.98 228M507.54 115L504.25 228M501.50 115L501.50 228M495.46 115L498.75 228M489.45 115L496.02 228M483.52 115L493.33 228M477.71 115L490.68 228M472.03 115L488.11 228M466.54 115L485.61 228M461.27 115L483.21 228M456.24 115L480.93 228M451.49 115L478.77 228M447.05 115L476.75 228M442.95 115L474.89 228M439.21 115L473.18 228M435.85 115L471.66 228M432.89 115L470.31 228M430.36 115L469.16 228M428.27 115L468.21 228M426.63 115L467.47 228M425.45 115L466.93 228M424.74 115L466.61 228M424.50 115L466.50 228" stroke="#00006c" stroke-width="0.75" stroke-opacity="0.5" fill="none"/><path d="M539.00 242L583.50 485M538.88 242L583.25 485M538.54 242L582.49 485M537.96 242L581.23 485M537.16 242L579.49 485M536.15 242L577.26 485M534.91 242L574.56 485M533.47 242L571.42 485M531.84 242L567.84 485M530.02 242L563.85 485M528.02 242L559.48 485M525.85 242L554.75 485M523.54 242L549.70 485M521.09 242L544.34 485M518.52 242L538.73 485M515.85 242L532.88 485M513.09 242L526.84 485M510.25 242L520.64 485M507.37 242L514.33 485M504.44 242L507.93 485M501.50 242L501.50 485M498.56 242L495.07 485M495.63 242L488.67 485M492.75 242L482.36 485M489.91 242L476.16 485M487.15 242L470.12 485M484.48 242L464.27 485M481.91 242L458.66 485M479.46 242L453.30 485M477.15 242L448.25 485M474.98 242L443.52 485M472.98 242L439.15 485M471.16 242L435.16 485M469.53 242L431.58 485M468.09 242L428.44 485M466.85 242L425.74 485M465.84 242L423.51 485M465.04 242L421.77 485M464.46 242L420.51 485M464.12 242L419.75 485M464.00 242L419.50 485" stroke="#00006c" stroke-width="0.75" stroke-opacity="0.9" fill="none"/><path d="M535.50 242L579.50 485M535.40 242L579.26 485M535.08 242L578.54 485M534.56 242L577.34 485M533.84 242L575.68 485M532.91 242L573.56 485M531.79 242L571.00 485M530.49 242L568.01 485M529.01 242L564.60 485M527.35 242L560.81 485M525.54 242L556.65 485M523.58 242L552.16 485M521.48 242L547.35 485M519.26 242L542.25 485M516.94 242L536.91 485M514.51 242L531.35 485M512.01 242L525.60 485M509.44 242L519.71 485M506.82 242L513.70 485M504.17 242L507.62 485M501.50 242L501.50 485M498.83 242L495.38 485M496.18 242L489.30 485M493.56 242L483.29 485M490.99 242L477.40 485M488.49 242L471.65 485M486.06 242L466.09 485M483.74 242L460.75 485M481.52 242L455.65 485M479.42 242L450.84 485M477.46 242L446.35 485M475.65 242L442.19 485M473.99 242L438.40 485M472.51 242L434.99 485M471.21 242L432.00 485M470.09 242L429.44 485M469.16 242L427.32 485M468.44 242L425.66 485M467.92 242L424.46 485M467.60 242L423.74 485M467.50 242L423.50 485" stroke="#00006c" stroke-width="0.75" stroke-opacity="0.6" fill="none"/><rect x="416.75" y="107.8" width="169.25" height="7.5" rx="3.75" fill="#00006c"/><rect x="419.38" y="110.05" width="164.00" height="1.13" fill="#6a6a8a" opacity="0.35"/><rect x="419.38" y="112.30" width="164.00" height="1.13" fill="#6a6a8a" opacity="0.35"/><rect x="457.3" y="227.5" width="88.59999999999997" height="14.800000000000011" rx="7.400000000000006" fill="#00006c"/><rect x="462.48" y="230.46" width="78.24" height="1.78" fill="#6a6a8a" opacity="0.4"/><rect x="462.48" y="234.16" width="78.24" height="2.52" fill="#6a6a8a" opacity="0.45"/><rect x="462.48" y="238.16" width="78.24" height="1.48" fill="#6a6a8a" opacity="0.35"/><rect x="417" y="484.7" width="169" height="6.900000000000034" rx="3.450000000000017" fill="#00006c"/><rect x="419.42" y="486.63" width="164.17" height="0.97" fill="#6a6a8a" opacity="0.4"/><rect x="419.42" y="488.50" width="164.17" height="1.17" fill="#6a6a8a" opacity="0.45"/></svg>
<span style="left:509px;top:490.59px;font-size:5.8px;line-height:5.8px;color:#f0f0f0;transform:scaleX(0.910);-webkit-text-stroke:0.1px #f0f0f0;font-weight:bold;">front X</span>
<svg style="left:178px;top:470px;" width="20" height="20" viewBox="0 0 20 20"><path d="M5.5 9V16.3" stroke="#2fd02f" stroke-width="1"/><path d="M5.5 16.3H13" stroke="#3030e0" stroke-width="1"/><rect x="4.3" y="13" width="2.4" height="3" fill="#c83030" opacity="0.8"/><path d="M5.5 9V16" stroke="#40e040" stroke-width="0.8"/><path d="M3.8 4L5.5 6.2L7.2 4M5.5 6.2V8" stroke="#2fd02f" stroke-width="0.9" fill="none"/><path d="M13.2 12.2H15.5L13.2 15.5H15.5" stroke="#3030e0" stroke-width="0.9" fill="none"/></svg>
<div style="left:172px;top:93.5px;width:1px;height:7px;background:#6e6e6e;"></div>
<svg style="left:177px;top:93px;" width="9" height="8" viewBox="0 0 9 8"><rect x="0" y="2" width="6" height="4" fill="#d0d0d0"/><path d="M6 4L8.5 2V6Z" fill="#d0d0d0"/></svg>
<svg style="left:187px;top:93px;" width="10" height="8" viewBox="0 0 10 8"><rect x="2" y="1.5" width="5" height="3.5" fill="#d0d0d0"/><path d="M7 3.2L9 1.5V5Z" fill="#d0d0d0"/><rect x="0.5" y="4.5" width="3" height="3.5" fill="#3cb4c0"/></svg>
<svg style="left:197px;top:93px;" width="10" height="8" viewBox="0 0 10 8"><rect x="1" y="1" width="6" height="3" fill="#d0d0d0"/><path d="M7 2.5L9.5 1V4.5Z" fill="#d0d0d0"/><circle cx="3" cy="5.5" r="2" fill="none" stroke="#3cb4c0" stroke-width="1.1"/></svg>
<svg style="left:209px;top:93px;" width="6" height="8" viewBox="0 0 6 8"><path d="M1 0.5H5V7.5L3 6L1 7.5Z" fill="#bbb"/></svg>
<svg style="left:218px;top:93px;" width="9" height="8" viewBox="0 0 9 8"><path d="M3 7L8 1L6 6Z" fill="#3cb4c0"/><path d="M1 8L7 4" stroke="#999" stroke-width="1"/></svg>
<svg style="left:228px;top:93px;" width="10" height="8" viewBox="0 0 10 8"><circle cx="5.5" cy="4.5" r="2" fill="none" stroke="#3cb4c0" stroke-width="1.1"/><path d="M4 6L1.5 8" stroke="#3cb4c0" stroke-width="1.1"/><path d="M1 2H4M2.5 0.5V3.5" stroke="#aaa" stroke-width="0.8"/></svg>
<svg style="left:238px;top:93px;" width="9" height="8" viewBox="0 0 9 8"><path d="M3 6L8 1" stroke="#d0d0d0" stroke-width="1.3"/><circle cx="2.5" cy="6.5" r="1.5" fill="#3cb4c0"/></svg>
<div style="left:249px;top:93.5px;width:1px;height:7px;background:#6e6e6e;"></div>
<svg style="left:253px;top:93px;" width="1" height="8" viewBox="0 0 1 8"></svg>
<div style="left:252.9px;top:91.9px;width:9.4px;height:9.2px;background:#4d86b0;"></div>
<div style="left:253.9px;top:92.9px;width:7.4px;height:7.2px;background:#5a5a5a;"></div>
<svg style="left:254.5px;top:94px;" width="6" height="6" viewBox="0 0 6 6"><rect x="0" y="0" width="2.5" height="2.5" fill="#ccc"/><rect x="3.5" y="0" width="2.5" height="2.5" fill="#ccc"/><rect x="0" y="3.5" width="2.5" height="2.5" fill="#ccc"/><rect x="3.5" y="3.5" width="2.5" height="2.5" fill="#ccc"/></svg>
<svg style="left:264px;top:93px;" width="8" height="8" viewBox="0 0 8 8"><rect x="0.5" y="0.5" width="7" height="7" fill="#bbb" stroke="#9a9a9a" stroke-width="1"/><rect x="1.5" y="3" width="5" height="2" fill="#222"/></svg>
<svg style="left:274px;top:93px;" width="8" height="8" viewBox="0 0 8 8"><rect x="0.5" y="0.5" width="7" height="7" fill="#3a3a3a" stroke="#9a9a9a" stroke-width="1"/><circle cx="4" cy="4" r="1.6" fill="#3cb4c0"/></svg>
<svg style="left:284px;top:93px;" width="8" height="8" viewBox="0 0 8 8"><rect x="0.5" y="0.5" width="7" height="7" fill="#3a3a3a" stroke="#3f3f3f" stroke-width="1"/><circle cx="4" cy="4" r="2.2" fill="#444"/></svg>
<svg style="left:294px;top:93px;" width="8" height="8" viewBox="0 0 8 8"><rect x="0.5" y="0.5" width="7" height="7" fill="#3a3a3a" stroke="#9a9a9a" stroke-width="1"/><path d="M4 1V7M1 4H7" stroke="#3cb4c0" stroke-width="1"/></svg>
<svg style="left:304.2px;top:93px;" width="8" height="8" viewBox="0 0 8 8"><rect x="0.5" y="0.5" width="7" height="7" fill="#3a3a3a" stroke="#9a9a9a" stroke-width="1"/><path d="M1.5 6.5L6.5 1.5" stroke="#3cb4c0" stroke-width="1.4"/></svg>
<svg style="left:314.5px;top:93px;" width="8" height="8" viewBox="0 0 8 8"><rect x="0.5" y="0.5" width="7" height="7" fill="#3a3a3a" stroke="#9a9a9a" stroke-width="1"/><path d="M2 2H6M4 2V6.5" stroke="#3cb4c0" stroke-width="1.1"/></svg>
<div style="left:325.8px;top:93.5px;width:1px;height:7px;background:#6e6e6e;"></div>
<div style="left:329.3px;top:92px;width:9.6px;height:9.2px;background:#4d86b0;"></div>
<div style="left:330.3px;top:93px;width:7.6px;height:7.2px;background:#5a5a5a;"></div>
<svg style="left:330.6px;top:93.2px;" width="7" height="7" viewBox="0 0 7 7"><path d="M3.5 0.5L6.5 2V5L3.5 6.5L0.5 5V2Z" fill="none" stroke="#ccc" stroke-width="0.7"/><path d="M0.5 2L3.5 3.5L6.5 2M3.5 3.5V6.5" stroke="#aaa" stroke-width="0.6" fill="none"/></svg>
<svg style="left:341px;top:93px;" width="8" height="8" viewBox="0 0 8 8"><path d="M3.6 0.5L7.2 2.2V5.8L3.6 7.5L0 5.8V2.2Z" fill="#3cb4c0"/><path d="M0 2.2L3.6 3.9L7.2 2.2M3.6 3.9V7.5" stroke="#1e7f88" stroke-width="0.8" fill="none"/></svg>
<svg style="left:351px;top:93px;" width="8" height="8" viewBox="0 0 8 8"><circle cx="3.5" cy="4" r="3.4" fill="#aaa"/><path d="M3.5 0.6A3.4 3.4 0 0 0 3.5 7.4Z" fill="#e0e0e0"/></svg>
<svg style="left:360.6px;top:93px;" width="9" height="8" viewBox="0 0 9 8"><circle cx="4.2" cy="4" r="3.6" fill="#9a9a9a"/><rect x="1.5" y="2.5" width="5.5" height="3" fill="#3cb4c0"/><circle cx="4.2" cy="4" r="1" fill="#555"/></svg>
<svg style="left:371.4px;top:93px;" width="8" height="8" viewBox="0 0 8 8"><circle cx="3.5" cy="4" r="3.4" fill="#999"/><path d="M1 2.5H6M0.5 4H6.5M1 5.5H6" stroke="#666" stroke-width="0.6"/></svg>
<svg style="left:381.2px;top:93px;" width="8" height="8" viewBox="0 0 8 8"><circle cx="4" cy="3.3" r="2.2" fill="#e8e8e8"/><rect x="3" y="5" width="2" height="2.5" fill="#ccc"/><path d="M0.5 3H1.5M6.5 3H7.5M1 1L1.8 1.8M7 1L6.2 1.8" stroke="#ccc" stroke-width="0.7"/></svg>
<svg style="left:391px;top:93px;" width="9" height="8" viewBox="0 0 9 8"><circle cx="5" cy="4" r="3.5" fill="#405a60"/><path d="M0 6L2 5" stroke="#555"/></svg>
<div style="left:403px;top:93.5px;width:1px;height:7px;background:#6e6e6e;"></div>
<svg style="left:407.7px;top:93px;" width="8" height="8" viewBox="0 0 8 8"><circle cx="3.7" cy="3.2" r="3" fill="#ddd"/><path d="M0 6.5Q3.7 8.5 7.4 6.5" stroke="#3cb4c0" stroke-width="1.1" fill="none"/></svg>
<svg style="left:417.8px;top:93px;" width="8" height="8" viewBox="0 0 8 8"><circle cx="5" cy="2.8" r="2.6" fill="#ddd"/><path d="M0.5 7.5L3.5 4.5" stroke="#888" stroke-width="2.3"/></svg>
<svg style="left:428px;top:93px;" width="7" height="8" viewBox="0 0 7 8"><path d="M3.5 0.5L0.5 4L3.5 7.5" stroke="#3cb4c0" stroke-width="1.3" fill="none"/><path d="M3.5 0.5L6.5 4L3.5 7.5" stroke="#ccc" stroke-width="1.3" fill="none"/></svg>
<svg style="left:438px;top:93px;" width="8" height="8" viewBox="0 0 8 8"><rect x="0" y="0" width="7.5" height="8" fill="#3d4a4c"/><rect x="2" y="2.5" width="5" height="5" fill="#3e5a5e"/></svg>
<div style="left:449.2px;top:93.5px;width:1px;height:7px;background:#6e6e6e;"></div>
<svg style="left:453.4px;top:93px;" width="8" height="8" viewBox="0 0 8 8"><rect x="0.5" y="0.5" width="5" height="5" fill="none" stroke="#3cb4c0" stroke-width="0.9" stroke-dasharray="1 1"/><path d="M4.5 3L7.5 7.5L6 7L5 8Z" fill="#ccc"/></svg>
<div style="left:465.4px;top:93.5px;width:1px;height:7px;background:#6e6e6e;"></div>
<svg style="left:469.8px;top:93px;" width="7.5" height="8" viewBox="0 0 7.5 8"><rect x="0" y="3" width="4.5" height="5" fill="#ccc"/><rect x="3" y="0.5" width="4" height="4.5" fill="#ccc"/><rect x="3" y="3" width="1.5" height="2" fill="#444"/></svg>
<svg style="left:480.1px;top:93px;" width="7.5" height="8" viewBox="0 0 7.5 8"><rect x="0" y="3" width="4.5" height="5" fill="#bbb"/><rect x="2.5" y="0.5" width="4.5" height="4.5" fill="none" stroke="#bbb"/></svg>
<svg style="left:490px;top:93px;" width="7.5" height="8" viewBox="0 0 7.5 8"><rect x="0.5" y="0.5" width="6.5" height="7" fill="none" stroke="#bbb"/><path d="M2 2L5.5 5.5" stroke="#ccc" stroke-width="1.1"/></svg>
<div style="left:501.4px;top:93.5px;width:1px;height:7px;background:#6e6e6e;"></div>
<svg style="left:506.9px;top:93px;" width="7.5" height="8" viewBox="0 0 7.5 8"><circle cx="3.5" cy="4" r="2.6" fill="none" stroke="#ddd" stroke-width="1.6" stroke-dasharray="1.3 0.7"/></svg>
<div style="left:516.2px;top:92.2px;width:19.5px;height:7.8px;background:#2b2b2b;border-radius:1px"></div>
<span style="left:518px;top:95.27px;font-size:6.3px;line-height:6.3px;color:#c8c8c8;transform:scaleX(0.938);-webkit-text-stroke:0.1px #c8c8c8;">0.00</span>
<svg style="left:539.7px;top:93px;" width="6.5" height="8" viewBox="0 0 6.5 8"><path d="M3 0.5H6V7.5H3A3 3.5 0 0 1 3 0.5Z" fill="#ddd"/><path d="M2.5 4L4 3V5Z" fill="#444"/></svg>
<div style="left:549px;top:92.2px;width:19.7px;height:7.8px;background:#2b2b2b;border-radius:1px"></div>
<span style="left:551px;top:95.27px;font-size:6.3px;line-height:6.3px;color:#c8c8c8;transform:scaleX(0.938);-webkit-text-stroke:0.1px #c8c8c8;">1.00</span>
<div style="left:571px;top:92px;width:9px;height:9.2px;background:#4d86b0;"></div>
<div style="left:572px;top:93px;width:7px;height:7.2px;background:#555;"></div>
<svg style="left:572.5px;top:93.5px;" width="6" height="6" viewBox="0 0 6 6"><circle cx="3" cy="3" r="2.8" fill="#3cb4c0"/><path d="M1 2.5H5M1 3.8H5" stroke="#2a6f77" stroke-width="0.7"/></svg>
<div style="left:581.9px;top:92.2px;width:77.5px;height:9px;background:#555555;"></div>
<div style="left:659px;top:92.2px;width:9.5px;height:9px;background:#5a5a5a;"></div>
<svg style="left:660px;top:95px;" width="8" height="5" viewBox="0 0 8 5"><path d="M1 0.5H7L4 4Z" fill="#ddd"/></svg>
<span style="left:584px;top:95.47px;font-size:6.3px;line-height:6.3px;color:#d0d0d0;transform:scaleX(0.784);-webkit-text-stroke:0.1px #d0d0d0;">sRGB gamma</span></body></html>
